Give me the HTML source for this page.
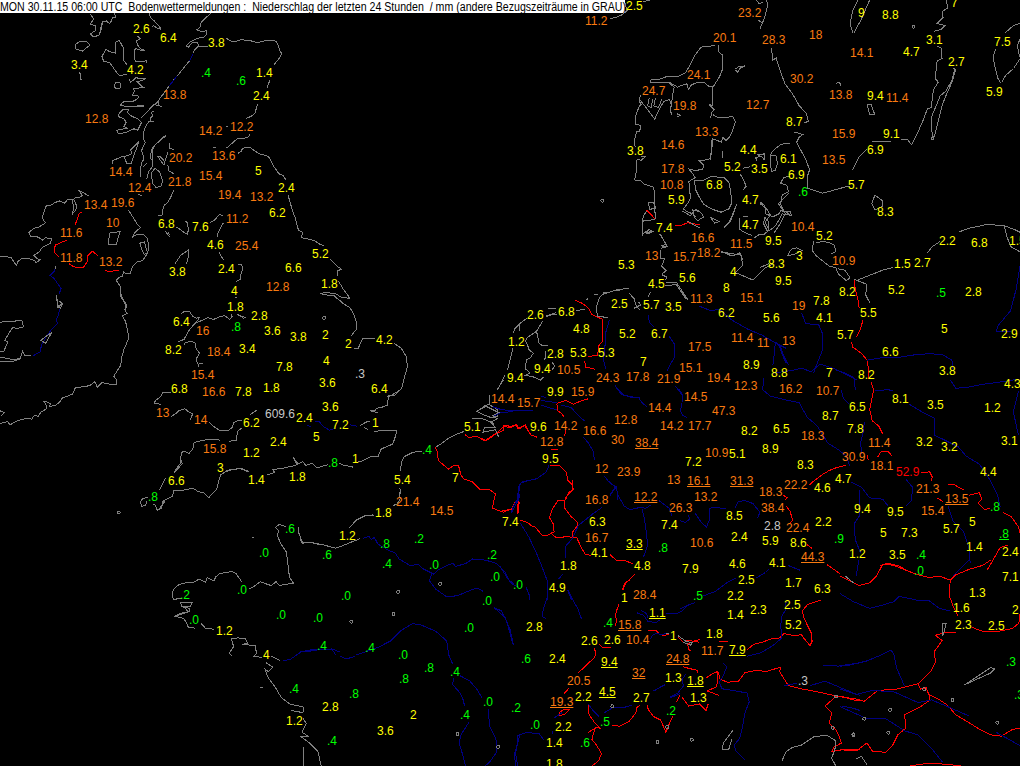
<!DOCTYPE html>
<html><head><meta charset="utf-8"><style>
html,body{margin:0;padding:0;background:#000;width:1020px;height:766px;overflow:hidden;position:relative}
.l{position:absolute;font-family:"Liberation Sans",sans-serif;font-size:12px;line-height:12px;white-space:nowrap}
.y{color:#ffff00}.o{color:#f87a10}.g{color:#00ff00}.w{color:#c8c8c8}.r{color:#ff0000}
.u{text-decoration:underline;text-underline-offset:1px}
#hd{position:absolute;left:0;top:0;width:625px;height:13px;background:#fff;overflow:hidden}
#hd span{position:absolute;left:0;top:1px;font-family:"Liberation Sans",sans-serif;font-size:12px;line-height:12px;color:#000;white-space:nowrap;transform-origin:0 0;transform:scaleX(0.884)}
svg{position:absolute;left:0;top:0}
</style></head><body>
<svg width="1020" height="766" style="position:absolute;left:0;top:0" shape-rendering="crispEdges"><polyline points="100.0,29.9 102.6,21.6 106.4,21.0 109.6,23.5 111.5,21.0 112.2,17.8 115.4,17.1 114.7,13.0" fill="none" stroke="#808080" stroke-width="1"/><polyline points="90.0,14.0 94.0,19.0 90.0,24.0 96.0,26.0 95.0,31.0 90.0,34.0 94.0,37.0 99.0,35.0 101.0,30.0 102.6,21.6" fill="none" stroke="#808080" stroke-width="1"/><polyline points="75.0,45.0 80.0,41.0 86.0,41.0 90.0,45.0 82.5,51.0 76.0,49.0 75.0,45.0" fill="none" stroke="#808080" stroke-width="1"/><polyline points="79.0,72.0 81.0,75.0 80.0,79.0 82.0,79.5" fill="none" stroke="#808080" stroke-width="1"/><polyline points="149.3,13.0 150.5,17.8 153.7,20.3 156.3,23.5 158.9,26.1 161.4,29.3" fill="none" stroke="#808080" stroke-width="1"/><polyline points="152.5,26.7 153.5,25.5 157.0,28.0 161.4,29.3" fill="none" stroke="#808080" stroke-width="1"/><polyline points="137.7,36.3 140.3,38.9 136.5,40.8 137.7,45.3 140.9,49.1 145.4,50.4 140.9,50.4 135.2,48.5 134.3,53.0 135.2,61.3 139.7,61.9 144.1,61.3 146.7,60.6 146.1,62.5" fill="none" stroke="#808080" stroke-width="1"/><polyline points="126.9,64.5 123.7,60.6 123.0,47.2 119.2,40.2 116.0,42.1 115.4,53.0 109.6,51.7 105.8,49.1 101.9,56.8 103.8,61.3 109.6,62.5 112.8,67.0 115.4,70.9 119.2,75.3 126.9,74.7" fill="none" stroke="#808080" stroke-width="1"/><polyline points="128.8,78.5 130.7,82.4 136.5,77.3 138.4,78.5 145.4,78.5 144.1,79.8 137.1,81.7 140.9,85.6 144.1,87.5 142.2,87.5 133.3,88.8 134.5,91.3 132.6,95.2 137.7,95.8 139.0,97.1 134.5,100.9 122.4,102.2 121.1,105.4 128.2,106.7 138.4,106.0 143.5,106.7" fill="none" stroke="#808080" stroke-width="1"/><polyline points="161.4,96.5 169.1,86.2 176.8,76.0 179.3,73.4 189.6,60.6 193.4,53.6" fill="none" stroke="#808080" stroke-width="1"/><polyline points="169.1,86.2 176.8,76.0" fill="none" stroke="#000080" stroke-width="1"/><polyline points="189.6,60.6 193.4,53.6" fill="none" stroke="#000080" stroke-width="1"/><polyline points="211.3,13.0 204.9,18.4 201.1,22.2 199.8,27.4 196.6,29.9 202.4,31.8 206.2,30.6 206.2,35.0 203.6,37.6 197.3,38.2 189.6,42.1 186.4,45.9 188.3,47.2 192.1,42.7 197.3,42.1 198.5,45.9 194.7,49.7 192.8,53.6" fill="none" stroke="#808080" stroke-width="1"/><polyline points="198.5,45.9 202.4,46.5 207.5,46.5" fill="none" stroke="#808080" stroke-width="1"/><polyline points="151.2,107.3 156.3,103.5 159.5,99.0 161.4,96.5" fill="none" stroke="#808080" stroke-width="1"/><polyline points="135.2,100.6 130.7,101.9 123.0,101.9 121.1,104.5 124.3,106.4 130.7,107.0 138.4,105.8 143.5,105.8" fill="none" stroke="#808080" stroke-width="1"/><polyline points="128.8,109.6 123.0,109.6 119.2,113.4 118.6,116.6 124.3,119.2 126.2,123.0 123.7,126.2 126.9,128.2 117.9,130.1 116.6,130.7 118.6,133.9 125.6,132.6 133.9,128.8 137.7,130.1 141.6,122.4 138.4,119.2 130.1,115.4 127.5,112.2 128.8,109.6" fill="none" stroke="#808080" stroke-width="1"/><polyline points="140.9,117.9 148.6,110.2 153.7,104.5 158.9,105.8 162.1,106.4" fill="none" stroke="#808080" stroke-width="1"/><polyline points="158.9,100.0 158.2,105.1" fill="none" stroke="#808080" stroke-width="1"/><polyline points="153.7,110.9 151.2,112.8 153.1,116.0 149.9,117.9 150.5,121.1 153.7,121.8 148.6,121.8 145.4,126.9 143.5,132.0 144.1,140.9 145.4,142.2 141.6,150.5 142.2,152.5 144.1,158.9 141.6,162.7 140.9,166.5 140.3,176.8" fill="none" stroke="#808080" stroke-width="1"/><polyline points="147.3,162.7 142.9,167.2" fill="none" stroke="#808080" stroke-width="1"/><polyline points="112.2,164.0 112.2,160.8 123.0,156.3 125.6,156.3 132.0,153.7 130.7,149.9 139.0,141.6 134.5,153.7 131.3,163.3 126.9,164.0 124.3,156.9" fill="none" stroke="#808080" stroke-width="1"/><polyline points="166.5,135.8 162.7,137.1 153.7,146.1 151.2,151.2 150.5,158.9 152.5,160.1 152.5,166.5 148.6,171.7 146.7,179.3" fill="none" stroke="#808080" stroke-width="1"/><polyline points="165.9,135.8 155.0,144.8 152.5,149.9 152.5,160.1" fill="none" stroke="#808080" stroke-width="1"/><polygon points="157.6,156.3 164.0,165.3 164.6,161.4 160.1,156.3" fill="none" stroke="#808080" stroke-width="1"/><polyline points="169.7,142.9 169.1,148.6 173.6,149.3" fill="none" stroke="#808080" stroke-width="1"/><polyline points="167.8,152.5 165.3,160.1 166.5,161.4" fill="none" stroke="#808080" stroke-width="1"/><polygon points="155.0,168.5 151.2,172.9 152.5,183.2 156.3,187.7 161.4,185.7 162.7,180.6 159.5,171.7" fill="none" stroke="#808080" stroke-width="1"/><polyline points="167.8,165.3 169.1,171.0 173.6,173.6" fill="none" stroke="#808080" stroke-width="1"/><polyline points="174.2,189.6 170.4,197.9" fill="none" stroke="#808080" stroke-width="1"/><polyline points="137.7,194.7 142.2,195.3" fill="none" stroke="#808080" stroke-width="1"/><polyline points="226.2,38.3 232.0,41.5 238.4,40.9 240.9,39.2 244.8,40.2 251.2,40.9 256.3,42.4 261.4,41.8 266.5,40.2 274.2,40.2 276.8,42.2 278.7,46.6 280.0,51.1 281.9,53.7 279.3,58.2 274.2,64.5" fill="none" stroke="#808080" stroke-width="1"/><polyline points="269.7,80.5 267.2,87.6" fill="none" stroke="#808080" stroke-width="1"/><polyline points="257.6,103.6 255.0,113.2 251.2,116.4 246.1,118.3" fill="none" stroke="#808080" stroke-width="1"/><polyline points="225.6,126.6 227.5,126.6" fill="none" stroke="#808080" stroke-width="1"/><polyline points="249.9,134.3 248.6,136.9 244.8,138.2 237.1,138.8 232.0,143.3 228.2,147.1 225.6,147.7" fill="none" stroke="#808080" stroke-width="1"/><polyline points="212.8,147.5 216.0,147.5" fill="none" stroke="#808080" stroke-width="1"/><polyline points="237.7,153.5 240.9,151.6 242.2,149.0 244.8,147.4 250.5,147.4 253.7,150.3 260.1,154.1 267.8,156.1 270.4,159.3 272.9,165.0 276.8,170.8 279.3,174.0 283.2,175.3 285.7,179.7" fill="none" stroke="#808080" stroke-width="1"/><polyline points="288.3,195.1 291.5,207.2" fill="none" stroke="#808080" stroke-width="1"/><polyline points="173.7,190.0 170.5,197.7 167.9,202.2 164.1,205.4 162.2,211.1 162.8,215.0" fill="none" stroke="#808080" stroke-width="1"/><polyline points="158.3,215.6 162.2,215.6" fill="none" stroke="#808080" stroke-width="1"/><polyline points="165.4,231.0 167.9,234.8 170.5,237.3" fill="none" stroke="#808080" stroke-width="1"/><polyline points="168.6,232.2 169.2,235.4" fill="none" stroke="#808080" stroke-width="1"/><polyline points="176.2,227.1 180.7,229.7 184.5,232.9 187.7,234.1 188.4,228.4 187.1,222.6 185.2,221.4 188.4,222.6" fill="none" stroke="#808080" stroke-width="1"/><polyline points="210.1,222.6 214.0,220.7 219.7,214.3 223.6,216.2" fill="none" stroke="#808080" stroke-width="1"/><polyline points="223.6,222.6 221.0,227.1 217.8,233.5 217.2,236.7" fill="none" stroke="#808080" stroke-width="1"/><polyline points="219.1,252.1 223.6,260.4" fill="none" stroke="#808080" stroke-width="1"/><polyline points="175.0,263.6 180.7,255.3 188.4,250.1 188.4,256.5 186.5,263.6" fill="none" stroke="#808080" stroke-width="1"/><polyline points="237.7,264.2 241.5,264.9 242.8,268.1 240.9,274.5 240.2,279.6 236.4,281.5" fill="none" stroke="#808080" stroke-width="1"/><polyline points="288.2,195.5 291.4,207.3 295.3,218.2 298.4,230.0 302.4,232.4 301.6,237.8 307.1,238.6 314.9,241.0 319.6,244.1 323.5,245.7" fill="none" stroke="#808080" stroke-width="1"/><polyline points="329.8,259.0 333.7,262.9 336.9,266.1 341.6,269.2 337.6,270.8 337.6,275.5" fill="none" stroke="#808080" stroke-width="1"/><polyline points="338.4,281.0 343.1,288.8 347.8,295.1 349.4,298.2 341.6,297.5 335.3,293.5 325.9,292.7 319.6,293.5 327.5,295.1 333.7,295.1 336.9,298.2 344.7,304.5 351.0,308.4" fill="none" stroke="#808080" stroke-width="1"/><polyline points="339.0,300.0 343.5,303.8 349.9,307.7 353.7,314.1 356.3,321.8 356.3,329.4 351.2,335.8" fill="none" stroke="#808080" stroke-width="1"/><polyline points="354.4,348.4 358.2,348.4 362.7,338.4 374.9,338.4" fill="none" stroke="#808080" stroke-width="1"/><polyline points="394.0,343.5 401.1,348.0 406.2,356.3 407.5,366.5 404.9,375.5 401.7,388.3 394.0,396.0 389.6,395.3 387.0,397.2" fill="none" stroke="#808080" stroke-width="1"/><polyline points="400.0,390.2 390.6,395.7 388.2,398.0 387.5,405.1 381.2,407.5 376.5,408.2 374.9,410.6 370.2,410.6 378.0,412.9" fill="none" stroke="#808080" stroke-width="1"/><polyline points="360.2,425.5 367.1,421.6 370.2,421.6" fill="none" stroke="#808080" stroke-width="1"/><polyline points="363.9,427.1 368.6,430.2" fill="none" stroke="#808080" stroke-width="1"/><polyline points="374.1,431.0 378.0,431.0 382.7,430.2 396.9,430.2 394.5,439.6 392.2,444.3 381.2,449.0 378.0,456.9 370.2,456.9 360.8,461.6 356.1,462.4" fill="none" stroke="#808080" stroke-width="1"/><polyline points="352.9,467.1 342.0,464.7 339.6,463.1" fill="none" stroke="#808080" stroke-width="1"/><polyline points="327.8,464.7 316.9,467.8 312.2,463.1 305.9,465.5 302.7,461.6 298.0,463.9 293.3,457.6 297.3,464.7 291.8,466.3 280.8,468.6 272.9,469.4 274.5,472.5 266.7,474.9" fill="none" stroke="#808080" stroke-width="1"/><polyline points="240.0,468.6 248.6,471.8" fill="none" stroke="#808080" stroke-width="1"/><polyline points="307.5,425.5 310.6,426.3" fill="none" stroke="#000080" stroke-width="1"/><polyline points="315.3,421.6 319.2,421.6 323.1,426.3 329.4,430.2 334.1,428.6" fill="none" stroke="#000080" stroke-width="1"/><polyline points="349.8,424.7 356.9,426.3" fill="none" stroke="#000080" stroke-width="1"/><polyline points="250.2,414.5 257.3,409.8" fill="none" stroke="#808080" stroke-width="1"/><polyline points="180.9,313.7 184.8,311.1 189.9,311.8 192.5,316.2 196.3,318.2 199.5,317.5 196.9,321.4 191.2,327.7 188.6,330.9 184.1,339.3 178.4,341.8" fill="none" stroke="#808080" stroke-width="1"/><polyline points="196.3,322.6 201.4,320.7 207.8,317.5 213.6,319.4 219.3,316.9 224.5,315.6 229.6,319.4 232.1,316.9 231.5,313.7" fill="none" stroke="#808080" stroke-width="1"/><polyline points="237.2,314.3 243.6,318.2 244.9,317.5 238.5,315.0" fill="none" stroke="#808080" stroke-width="1"/><polyline points="235.3,298.3 236.6,297.0" fill="none" stroke="#808080" stroke-width="1"/><polyline points="184.1,344.4 185.4,342.5 191.2,341.2 195.0,343.1 196.3,348.9 199.5,353.3 196.9,357.8 196.3,359.7 198.9,366.8" fill="none" stroke="#808080" stroke-width="1"/><polyline points="198.9,363.6 202.7,363.6" fill="none" stroke="#808080" stroke-width="1"/><polyline points="171.0,392.8 167.1,392.8 162.6,392.8 160.7,396.6 155.6,400.5 154.3,403.0 160.7,404.3" fill="none" stroke="#808080" stroke-width="1"/><polyline points="171.0,416.5 175.4,413.9 178.6,410.7 185.0,408.8 188.9,412.0 192.7,413.9 190.1,419.7" fill="none" stroke="#808080" stroke-width="1"/><polyline points="208.7,421.6 213.2,426.1 219.6,430.5 228.5,430.5 232.4,427.3 233.6,422.9 237.5,420.9 242.0,420.9" fill="none" stroke="#808080" stroke-width="1"/><polyline points="242.0,428.0 237.5,431.2 236.2,440.1 228.5,441.4" fill="none" stroke="#808080" stroke-width="1"/><polyline points="219.6,440.1 209.3,439.1 200.4,440.8 194.0,442.7 192.7,449.1 188.9,453.6 183.7,451.0 181.2,452.9 180.5,463.2 174.1,472.1" fill="none" stroke="#808080" stroke-width="1"/><polyline points="226.0,471.5 232.4,469.6 241.3,468.3 249.0,471.5" fill="none" stroke="#808080" stroke-width="1"/><polyline points="181.4,460.0 182.2,463.9 174.3,472.5" fill="none" stroke="#808080" stroke-width="1"/><polyline points="165.7,478.0 159.4,489.8" fill="none" stroke="#808080" stroke-width="1"/><polyline points="147.6,497.6 142.9,498.4 140.6,501.6 141.4,506.3 145.3,505.5 146.9,501.6" fill="none" stroke="#808080" stroke-width="1"/><polyline points="153.1,503.9 155.5,505.5 157.1,510.2 161.8,507.8 162.5,501.6 168.0,498.4 172.7,496.1 173.5,490.6 181.4,490.6 193.1,488.2 197.8,491.4 204.1,492.9 208.8,497.6 216.7,489.0 219.8,477.3 220.6,474.9 227.6,470.2 240.2,468.6 248.0,471.8" fill="none" stroke="#808080" stroke-width="1"/><polyline points="89.4,196.3 81.6,191.6 79.2,190.8 82.4,195.5 80.0,197.1 75.3,197.8 73.7,199.4 76.9,206.5 75.3,210.4 72.2,214.3 73.7,208.8 72.2,199.4 67.5,199.4 65.9,201.8 64.3,203.3 59.6,201.0 54.9,202.5 50.2,205.7 46.3,205.7 43.9,212.0 42.4,217.5 43.9,220.6 45.5,222.9 39.2,226.9 33.7,228.4 29.0,232.4 30.6,236.3 38.4,237.1 42.4,240.2 45.5,237.8 51.8,238.6 50.2,243.3 42.4,247.3 39.2,252.0 33.7,255.1 37.6,259.0 40.0,259.8 36.1,262.9 34.5,260.6 29.8,259.0 22.0,258.2 18.0,261.4 16.5,265.3 14.1,262.2 11.0,257.5 6.3,256.7 0.0,256.7" fill="none" stroke="#808080" stroke-width="1"/><polyline points="81.6,212.0 79.2,213.5 75.3,224.5" fill="none" stroke="#ff0000" stroke-width="1"/><polyline points="66.7,240.2 62.7,241.8 55.7,244.9 54.1,248.8 54.9,252.7 58.8,256.7" fill="none" stroke="#ff0000" stroke-width="1"/><polyline points="69.0,263.7 73.7,266.9 83.1,267.6 87.1,262.2 87.8,255.9 92.5,251.2 98.0,255.9" fill="none" stroke="#ff0000" stroke-width="1"/><polyline points="105.1,270.0 108.2,271.6 119.2,270.3" fill="none" stroke="#ff0000" stroke-width="1"/><polyline points="128.6,210.4 134.1,219.0 138.0,225.3 140.4,227.6 134.9,232.4 132.5,237.1 136.5,234.7 143.5,234.7 147.5,238.6 149.0,248.0 146.7,254.3 142.7,260.6 136.5,262.2 132.5,266.9 130.2,273.1 125.5,273.9 123.9,271.6 122.4,276.3 119.2,277.1 116.1,280.2 120.8,287.3 120.8,296.7 123.9,301.4 126.3,306.1 125.5,310.0" fill="none" stroke="#808080" stroke-width="1"/><polygon points="109.8,233.1 120.0,231.6 116.1,244.9 108.2,244.1" fill="none" stroke="#808080" stroke-width="1"/><polygon points="139.6,243.3 144.3,241.8 147.5,252.7 144.3,254.3 142.0,249.6" fill="none" stroke="#808080" stroke-width="1"/><polyline points="55.7,266.9 54.1,271.6 50.2,275.5 54.1,278.6 58.0,284.1 61.2,288.8 58.8,294.3" fill="none" stroke="#000080" stroke-width="1"/><polyline points="55.0,266.0 55.7,268.5" fill="none" stroke="#808080" stroke-width="1"/><polyline points="56.5,295.1 58.0,307.6 62.7,302.9" fill="none" stroke="#808080" stroke-width="1"/><polyline points="120.0,290.0 121.6,296.3 126.3,304.9 124.7,309.6 127.1,313.5 122.4,315.9 125.5,321.4 127.8,330.8 128.6,338.6 123.9,349.6 121.6,357.5 120.8,365.3 113.7,376.3 116.9,380.2 116.1,384.1 109.8,384.1 102.0,382.5 97.3,387.3 94.9,381.8 89.4,385.7 75.3,388.0 72.2,394.3 62.0,398.2 59.6,402.2 54.8,405.7 49.7,406.3 50.3,403.8 46.5,401.9 43.3,401.2 45.9,403.8 46.5,408.9 40.8,412.1 38.2,416.5 34.4,415.2 31.9,419.1 26.8,418.4 19.1,420.3 14.0,422.3 10.2,424.8 7.6,421.6 0.0,423.5" fill="none" stroke="#808080" stroke-width="1"/><polyline points="0.0,322.2 9.4,321.4 22.0,320.6 23.5,326.9 17.3,328.4 12.5,327.7 9.4,332.4 4.7,340.2 7.8,341.8 3.9,351.2 0.0,351.2" fill="none" stroke="#808080" stroke-width="1"/><polyline points="0.0,357.5 6.3,358.2 14.1,359.8 20.4,358.2 22.7,351.2 25.1,355.9 31.4,355.9" fill="none" stroke="#808080" stroke-width="1"/><polyline points="0.0,361.4 12.5,361.4 20.4,359.0" fill="none" stroke="#808080" stroke-width="1"/><polyline points="59.6,308.8 58.8,313.5 56.5,319.8 57.3,323.7 51.8,329.2 47.1,335.5 41.6,344.9 40.0,352.0 32.9,355.9" fill="none" stroke="#000080" stroke-width="1"/><polygon points="40.8,340.2 45.5,343.3 51.8,332.4 47.1,335.5" fill="none" stroke="#808080" stroke-width="1"/><polyline points="56.5,296.3 57.3,304.1 60.4,308.0 62.7,303.3 58.8,301.0" fill="none" stroke="#808080" stroke-width="1"/><polyline points="527.1,318.0 520.0,323.5 514.5,329.0 513.7,332.9" fill="none" stroke="#808080" stroke-width="1"/><polyline points="512.9,347.8 510.6,358.0 507.5,369.8" fill="none" stroke="#808080" stroke-width="1"/><polyline points="505.1,374.5 497.3,390.2" fill="none" stroke="#808080" stroke-width="1"/><polyline points="489.4,394.9 489.4,404.3" fill="none" stroke="#808080" stroke-width="1"/><polyline points="489.4,404.3 484.7,405.9 476.9,411.4 483.1,414.5 491.0,417.6 497.3,416.1 498.0,409.8 492.5,406.7 489.4,404.3" fill="none" stroke="#808080" stroke-width="1"/><polyline points="472.2,418.4 481.6,418.4" fill="none" stroke="#808080" stroke-width="1"/><polyline points="520.0,323.5 519.2,330.6" fill="none" stroke="#808080" stroke-width="1"/><polyline points="542.7,321.2 536.5,331.4 527.1,337.6 525.5,340.8 527.8,345.5 528.6,349.4 533.3,353.3 530.2,358.0 526.3,359.6 525.5,369.0 530.2,372.9 525.5,375.3 533.3,376.9 540.4,380.0 543.5,376.9" fill="none" stroke="#808080" stroke-width="1"/><polyline points="536.5,331.4 538.0,337.6 538.0,342.4 542.0,345.5 547.5,345.5" fill="none" stroke="#808080" stroke-width="1"/><polyline points="546.7,316.5 553.7,314.1 556.9,314.1" fill="none" stroke="#808080" stroke-width="1"/><polyline points="547.5,308.6 556.1,308.6" fill="none" stroke="#808080" stroke-width="1"/><polyline points="545.1,351.0 545.9,357.3 543.5,360.4" fill="none" stroke="#808080" stroke-width="1"/><polyline points="552.2,362.0 554.5,365.9 552.2,369.8" fill="none" stroke="#808080" stroke-width="1"/><polyline points="492.5,406.7 502.0,409.8 512.9,410.6 533.3,410.6" fill="none" stroke="#000080" stroke-width="1"/><polyline points="494.1,416.1 500.4,412.9 512.9,411.4" fill="none" stroke="#000080" stroke-width="1"/><polyline points="541.2,396.5 545.9,397.3" fill="none" stroke="#000080" stroke-width="1"/><polyline points="541.2,400.4 556.9,402.7" fill="none" stroke="#000080" stroke-width="1"/><polyline points="541.2,405.1 550.6,408.2 556.9,409.8" fill="none" stroke="#000080" stroke-width="1"/><polyline points="464.1,431.4 457.8,433.7 448.4,438.4 442.2,443.1 435.9,447.1" fill="none" stroke="#808080" stroke-width="1"/><polyline points="421.8,451.0 412.4,452.5 404.5,456.5 401.4,462.0 400.6,470.6" fill="none" stroke="#808080" stroke-width="1"/><polyline points="399.8,487.8 400.6,494.1" fill="none" stroke="#808080" stroke-width="1"/><polyline points="395.9,504.3 392.7,505.9" fill="none" stroke="#808080" stroke-width="1"/><polyline points="373.9,515.3 370.0,516.1" fill="none" stroke="#808080" stroke-width="1"/><polyline points="435.1,447.1 437.5,451.8 438.2,460.4 443.7,465.1 448.4,469.0 454.7,465.1 458.6,465.9 461.0,475.3 464.1,479.2 472.0,481.6 476.7,486.3 479.8,489.4 489.2,489.4 495.5,494.1 493.9,500.4 492.4,508.2 503.3,512.2 512.7,508.2 515.1,502.0 517.5,500.4 519.0,503.5 518.2,512.9" fill="none" stroke="#ff0000" stroke-width="1"/><polyline points="464.9,434.5 468.8,437.6 476.7,436.1 484.5,440.8 495.5,433.7 503.3,430.6 503.3,425.1 508.0,427.5 516.7,424.3 519.0,429.0 525.3,425.1 528.4,431.4" fill="none" stroke="#ff0000" stroke-width="1"/><polyline points="476.7,411.0 486.1,406.3 498.6,412.5 492.4,415.7 497.1,418.8 490.8,422.0 495.5,427.5 484.5,427.5 482.9,432.2 495.5,429.8 498.6,436.9" fill="none" stroke="#808080" stroke-width="1"/><polyline points="472.0,418.8 482.2,418.5 493.9,423.5" fill="none" stroke="#808080" stroke-width="1"/><polyline points="530.0,480.0 520.6,483.1 518.2,491.0 518.2,500.4 511.2,512.9" fill="none" stroke="#000080" stroke-width="1"/><polyline points="655.3,218.8 649.8,220.4 643.5,220.4 642.0,226.7 642.7,236.1" fill="none" stroke="#808080" stroke-width="1"/><polyline points="646.7,211.0 643.5,215.7 642.0,222.0" fill="none" stroke="#808080" stroke-width="1"/><polygon points="648.2,203.0 652.9,202.0 656.0,208.0 649.8,209.4" fill="none" stroke="#808080" stroke-width="1"/><polyline points="654.5,200.0 655.3,218.8" fill="none" stroke="#808080" stroke-width="1"/><polygon points="645.1,232.2 649.8,229.8 652.9,231.4 648.2,233.7" fill="none" stroke="#808080" stroke-width="1"/><polyline points="646.7,210.2 652.2,215.7 655.3,219.6" fill="none" stroke="#ff0000" stroke-width="1"/><polyline points="674.9,225.1 680.4,225.9 687.5,222.7 692.2,223.5 700.0,225.1" fill="none" stroke="#ff0000" stroke-width="1"/><polyline points="682.0,211.0 690.6,215.7 695.3,209.4 700.0,211.8" fill="none" stroke="#808080" stroke-width="1"/><polyline points="687.5,221.2 700.0,228.2" fill="none" stroke="#808080" stroke-width="1"/><polyline points="660.0,233.7 663.9,240.8 667.1,246.3 662.4,247.1 661.6,245.5 665.5,244.7" fill="none" stroke="#808080" stroke-width="1"/><polyline points="660.8,250.2 660.0,258.0 664.7,258.8 661.6,265.9 666.3,270.6 662.4,273.7 662.4,275.3 667.1,276.9 665.5,280.0" fill="none" stroke="#808080" stroke-width="1"/><polyline points="665.5,282.4 676.5,282.4 688.2,300.4" fill="none" stroke="#808080" stroke-width="1"/><polyline points="665.5,285.5 676.5,284.7 685.9,298.8" fill="none" stroke="#808080" stroke-width="1"/><polyline points="650.6,291.8 648.2,296.5" fill="none" stroke="#808080" stroke-width="1"/><polyline points="628.6,288.6 618.4,289.4 610.6,291.8 604.3,293.3 599.6,297.3 596.5,306.7 597.3,316.1 607.5,317.6" fill="none" stroke="#808080" stroke-width="1"/><polyline points="628.6,292.5 634.1,298.8 636.5,306.7 640.4,310.6" fill="none" stroke="#808080" stroke-width="1"/><polyline points="638.8,302.0 640.4,305.1 634.1,308.2" fill="none" stroke="#808080" stroke-width="1"/><polyline points="613.7,291.0 623.1,289.4" fill="none" stroke="#808080" stroke-width="1"/><polyline points="602.7,292.5 607.5,293.3" fill="none" stroke="#808080" stroke-width="1"/><polyline points="594.1,294.9 598.0,294.4" fill="none" stroke="#808080" stroke-width="1"/><polyline points="585.5,300.4 587.8,298.8" fill="none" stroke="#808080" stroke-width="1"/><polyline points="574.5,299.6 582.4,303.5 588.6,308.2 591.8,314.5 596.5,316.9 602.7,319.2" fill="none" stroke="#ff0000" stroke-width="1"/><polyline points="576.1,310.6 585.5,309.0" fill="none" stroke="#808080" stroke-width="1"/><polyline points="547.8,308.2 555.7,308.2" fill="none" stroke="#808080" stroke-width="1"/><polyline points="546.3,316.1 555.7,312.9" fill="none" stroke="#808080" stroke-width="1"/><polyline points="715.1,45.5 701.0,47.1 694.7,55.7 689.2,66.7 685.3,72.9 677.5,76.9 668.0,76.1 657.1,80.0 651.6,79.2 650.0,82.4" fill="none" stroke="#808080" stroke-width="1"/><polyline points="640.6,94.9 639.0,101.2 641.4,104.3 639.0,106.7 635.9,115.3 635.1,123.9 640.6,125.5 639.8,131.0 636.7,131.0 635.1,137.3 634.3,142.0 635.1,146.7" fill="none" stroke="#808080" stroke-width="1"/><polyline points="641.4,156.9 646.1,156.1" fill="none" stroke="#808080" stroke-width="1"/><polyline points="718.2,45.5 719.0,51.8 722.2,54.9 722.9,68.2 719.8,76.1 715.1,83.9 712.7,87.1 712.7,105.9 708.8,104.3 714.3,109.8 712.0,112.2 710.4,118.4" fill="none" stroke="#808080" stroke-width="1"/><polyline points="712.7,114.5 718.2,117.6 726.1,117.6 732.4,116.1 735.5,121.6 732.4,131.0 729.2,137.3 726.1,140.4 722.9,137.3 721.4,142.0 716.7,140.4 712.7,138.8 712.0,146.7 710.4,160.0" fill="none" stroke="#808080" stroke-width="1"/><polyline points="650.0,82.4 657.1,82.4 669.6,82.4 677.5,87.1 683.7,84.7 686.9,83.9 688.4,89.4 691.6,84.7 697.8,82.4 704.1,82.4 708.8,86.3 712.7,87.1" fill="none" stroke="#808080" stroke-width="1"/><polyline points="668.8,83.1 674.3,87.1 672.7,94.9 670.4,110.6 672.0,115.3" fill="none" stroke="#808080" stroke-width="1"/><polyline points="639.8,99.6 650.8,113.7 654.7,119.2 657.1,113.7 661.0,105.9 664.1,101.2 669.6,99.6 671.2,104.3" fill="none" stroke="#808080" stroke-width="1"/><polyline points="649.2,98.0 647.6,105.9 651.6,107.5 652.4,98.8" fill="none" stroke="#808080" stroke-width="1"/><polyline points="655.5,98.0 653.9,105.9 658.6,107.5 661.8,98.8" fill="none" stroke="#808080" stroke-width="1"/><polyline points="735.5,69.0 738.6,66.7 744.9,65.9 740.2,68.2 737.8,72.2 735.5,69.8" fill="none" stroke="#808080" stroke-width="1"/><polyline points="676.7,113.7 680.6,115.3 677.5,116.9" fill="none" stroke="#808080" stroke-width="1"/><polyline points="722.2,151.4 722.9,157.6" fill="none" stroke="#808080" stroke-width="1"/><polyline points="757.5,156.1 765.3,152.9" fill="none" stroke="#808080" stroke-width="1"/><polyline points="637.8,158.8 641.0,160.4 645.7,156.5" fill="none" stroke="#808080" stroke-width="1"/><polyline points="637.1,158.8 636.3,171.4 634.7,180.0 641.0,180.8 644.1,183.9 653.5,187.1 654.3,191.8 654.3,207.5 655.9,219.2" fill="none" stroke="#808080" stroke-width="1"/><polyline points="711.6,140.0 711.6,149.4 710.0,158.8 703.7,160.4 699.0,160.4 703.7,165.1 702.9,169.0 695.9,170.6 688.8,169.0 692.7,173.7 695.1,177.6 688.8,181.6 689.6,188.6 690.4,198.0 688.0,202.7 683.3,209.0 688.0,212.2 692.7,213.7 695.9,216.9" fill="none" stroke="#808080" stroke-width="1"/><polygon points="694.3,180.8 703.7,180.0 711.6,176.1 715.5,176.9 724.1,177.6 728.8,182.4 730.4,190.2 732.0,202.7 728.8,209.0 721.0,212.2 711.6,209.0 703.7,204.3 699.0,196.5 695.9,190.2" fill="none" stroke="#808080" stroke-width="1"/><polygon points="692.7,209.8 700.6,212.2 703.7,216.9 697.5,220.8 694.3,216.9" fill="none" stroke="#808080" stroke-width="1"/><polygon points="736.7,204.3 730.4,220.0 724.1,227.8 730.4,221.6" fill="none" stroke="#808080" stroke-width="1"/><polygon points="710.0,216.9 714.7,223.1 719.4,221.6" fill="none" stroke="#808080" stroke-width="1"/><polyline points="742.9,168.2 747.6,167.5 750.0,166.7" fill="none" stroke="#808080" stroke-width="1"/><polyline points="757.1,154.1 764.9,154.1 764.1,159.6 761.8,156.5 755.5,157.3 757.1,161.2" fill="none" stroke="#808080" stroke-width="1"/><polyline points="771.2,153.3 774.3,149.4 780.6,144.7 786.9,143.1 790.0,143.9" fill="none" stroke="#808080" stroke-width="1"/><polygon points="770.4,154.9 775.9,155.7 777.5,163.5 775.1,170.6 771.2,171.4" fill="none" stroke="#808080" stroke-width="1"/><polyline points="739.8,173.7 743.7,180.0 746.1,186.3 742.9,190.2" fill="none" stroke="#808080" stroke-width="1"/><polyline points="760.2,202.0 764.9,205.9 765.7,213.7 772.7,216.9 779.0,213.7 780.6,210.6 786.9,212.2 790.0,215.3" fill="none" stroke="#808080" stroke-width="1"/><polyline points="739.8,218.4 739.8,229.4 744.5,232.5 752.4,235.7" fill="none" stroke="#808080" stroke-width="1"/><polyline points="742.9,216.1 747.6,216.4" fill="none" stroke="#808080" stroke-width="1"/><polyline points="753.9,238.0 758.6,234.9 763.3,234.9 768.0,231.0 768.8,221.6 764.9,217.6 763.3,223.1 767.3,231.0" fill="none" stroke="#808080" stroke-width="1"/><polyline points="774.3,232.5 780.6,223.1 785.3,213.7 780.6,204.3 782.2,194.9 788.4,191.8 786.9,185.5 780.6,183.1 783.7,177.6 790.0,176.1" fill="none" stroke="#808080" stroke-width="1"/><polyline points="659.8,234.1 667.6,246.7 661.4,248.2" fill="none" stroke="#808080" stroke-width="1"/><polyline points="721.0,251.4 732.0,256.1 739.8,252.9 742.9,260.0" fill="none" stroke="#808080" stroke-width="1"/><polyline points="642.5,234.0 648.8,229.5 652.0,231.0 645.7,233.3" fill="none" stroke="#808080" stroke-width="1"/><polyline points="760.0,28.7 765.2,15.7 767.8,5.2 766.5,0.0" fill="none" stroke="#808080" stroke-width="1"/><polyline points="771.7,48.3 772.5,60.1 776.2,58.0 778.8,66.6 784.8,83.6 792.6,94.0 799.2,105.7 806.5,113.6 808.3,121.4 804.4,122.7" fill="none" stroke="#808080" stroke-width="1"/><polyline points="793.9,131.9 803.1,134.5 799.2,137.1 796.6,142.3 805.7,159.3 809.6,169.7 807.0,177.5 807.0,188.0 822.7,193.2 846.2,186.7 850.1,185.9" fill="none" stroke="#808080" stroke-width="1"/><polyline points="852.7,169.7 859.2,156.7 867.0,148.8" fill="none" stroke="#808080" stroke-width="1"/><polyline points="872.3,141.0 890.5,141.0" fill="none" stroke="#808080" stroke-width="1"/><polyline points="852.7,32.6 850.1,23.5 852.7,10.4 857.9,0.0" fill="none" stroke="#808080" stroke-width="1"/><polyline points="854.0,32.6 860.5,20.9 869.7,0.0" fill="none" stroke="#808080" stroke-width="1"/><polygon points="867.0,104.4 869.7,114.9 874.9,114.9 871.0,104.4" fill="none" stroke="#808080" stroke-width="1"/><polyline points="835.7,83.6 839.6,82.2 840.9,86.2" fill="none" stroke="#808080" stroke-width="1"/><polygon points="874.9,195.1 882.7,200.9 882.7,206.1 874.9,210.0 871.7,203.5" fill="none" stroke="#808080" stroke-width="1"/><polyline points="854.0,279.2 855.3,289.7 857.9,298.8 859.2,307.9" fill="none" stroke="#ff0000" stroke-width="1"/><polyline points="863.1,319.7 860.5,328.8 856.6,336.7" fill="none" stroke="#ff0000" stroke-width="1"/><polyline points="851.4,341.9 852.7,347.1 861.8,353.6 867.0,360.2 868.4,368.0 868.0,380.0" fill="none" stroke="#ff0000" stroke-width="1"/><polyline points="801.8,313.2 805.7,323.6 818.7,324.9 822.7,334.0 822.7,349.7 817.4,362.8 813.5,373.2" fill="none" stroke="#000080" stroke-width="1"/><polyline points="775.7,341.9 779.6,347.1 783.5,357.5 786.1,362.8" fill="none" stroke="#000080" stroke-width="1"/><polyline points="773.0,373.2 791.3,370.6 801.8,368.0 810.9,371.9 820.1,364.1 835.7,369.3 846.2,374.5 856.6,380.0" fill="none" stroke="#000080" stroke-width="1"/><polyline points="867.0,360.2 882.7,357.5 898.4,357.5 914.1,354.9 929.7,353.6 942.8,354.9 951.9,360.2 953.2,370.6" fill="none" stroke="#000080" stroke-width="1"/><polyline points="1020.0,266.2 1016.0,289.7 1010.7,310.5 997.6,326.2 996.3,331.4 1010.7,331.4" fill="none" stroke="#000080" stroke-width="1"/><polyline points="1004.1,225.7 1006.7,236.1 1010.7,246.6 1020.0,251.8" fill="none" stroke="#808080" stroke-width="1"/><polyline points="958.4,232.2 968.9,228.3 987.2,224.4 1004.1,225.7 1014.6,229.6 1020.0,232.2" fill="none" stroke="#808080" stroke-width="1"/><polyline points="927.1,253.1 932.3,246.6 940.2,241.4" fill="none" stroke="#808080" stroke-width="1"/><polyline points="856.6,280.5 869.7,275.3 882.7,270.1 893.2,267.5" fill="none" stroke="#808080" stroke-width="1"/><polyline points="760.0,267.5 769.1,263.6" fill="none" stroke="#808080" stroke-width="1"/><polygon points="787.4,255.7 791.3,249.2 796.6,247.9 801.8,250.5 793.9,254.4" fill="none" stroke="#808080" stroke-width="1"/><polyline points="813.5,241.4 812.2,250.5 816.1,255.7 822.7,260.9 829.2,266.2 835.7,267.5" fill="none" stroke="#808080" stroke-width="1"/><polyline points="816.1,242.7 822.7,241.4 829.2,242.7 834.4,245.3 835.7,251.8 830.5,254.4" fill="none" stroke="#808080" stroke-width="1"/><polyline points="835.7,267.5 838.3,274.0 846.2,280.5 850.1,277.9 844.9,270.1 838.3,268.8" fill="none" stroke="#808080" stroke-width="1"/><polyline points="854.0,279.2 867.0,284.4 865.7,294.9 869.7,302.7" fill="none" stroke="#808080" stroke-width="1"/><polyline points="760.0,203.5 766.5,208.7 770.4,215.2 765.2,221.8 769.1,230.9 775.7,225.7 782.2,213.9 791.3,215.2 790.0,211.3 783.5,211.3 778.3,203.5 783.5,198.3 788.7,193.1" fill="none" stroke="#808080" stroke-width="1"/><polyline points="298.0,526.7 298.8,532.9 302.7,543.1 310.6,542.4 320.0,544.7" fill="none" stroke="#808080" stroke-width="1"/><polyline points="285.5,526.7 279.2,524.3 275.3,527.5 278.4,530.6 277.6,536.1 280.8,543.9 286.3,551.8 287.8,562.7 289.4,576.9 293.3,583.1 279.2,585.5 276.1,581.6 271.4,585.5 268.2,584.7 260.4,581.6 254.1,586.3 248.6,589.4" fill="none" stroke="#808080" stroke-width="1"/><polyline points="241.6,581.6 236.1,573.7 232.2,571.4 227.5,572.2 219.6,573.7 215.7,576.9 214.1,580.8 207.1,577.6 205.5,582.4 199.2,579.2 192.9,582.4 186.7,582.4 178.8,584.7 173.3,589.4 172.5,594.1 173.3,599.6 182.0,598.0" fill="none" stroke="#808080" stroke-width="1"/><polyline points="192.2,602.0 180.4,602.7 182.0,606.7 189.0,608.2 189.8,611.4 182.0,612.9 174.9,616.1" fill="none" stroke="#808080" stroke-width="1"/><polyline points="252.5,537.6 254.1,536.9" fill="none" stroke="#808080" stroke-width="1"/><polyline points="160.0,507.8 164.7,501.6" fill="none" stroke="#808080" stroke-width="1"/><polyline points="300.0,539.6 302.2,542.8 312.9,542.8 323.7,545.0 335.6,548.2 338.8,547.2 349.6,542.8 360.4,538.5" fill="none" stroke="#808080" stroke-width="1"/><polyline points="349.6,527.7 356.1,520.2 364.7,515.9 373.3,514.8" fill="none" stroke="#808080" stroke-width="1"/><polyline points="393.8,505.1 397.1,504.0 400.3,498.6 399.2,492.2" fill="none" stroke="#808080" stroke-width="1"/><polyline points="362.6,538.5 369.0,536.4 371.2,539.6 374.4,537.5 377.7,543.9 390.6,551.5 394.9,552.6 399.2,559.0 410.0,565.5 418.6,564.4 423.0,568.7 429.4,572.0 433.7,574.1 438.1,569.8 446.7,565.5 453.2,563.3 455.3,566.6 466.1,563.3 472.6,559.0 485.5,560.1 496.3,563.3 504.9,572.0 510.3,582.8 517.9,587.1" fill="none" stroke="#000080" stroke-width="1"/><polyline points="431.6,574.1 429.4,580.6 435.9,589.2 446.7,596.8 457.5,595.7 470.4,590.3 476.9,588.1 483.4,591.4" fill="none" stroke="#000080" stroke-width="1"/><polyline points="494.1,607.6 504.9,617.3 510.3,630.2 513.5,645.3" fill="none" stroke="#000080" stroke-width="1"/><polyline points="300.0,651.8 312.9,649.6 332.4,649.6 335.6,655.0" fill="none" stroke="#000080" stroke-width="1"/><polyline points="356.1,655.0 377.7,647.5 390.6,641.0 401.4,630.2 412.2,623.7 420.8,624.8 435.9,631.3 446.7,641.0 448.8,655.0" fill="none" stroke="#000080" stroke-width="1"/><polyline points="556.9,403.5 565.5,400.4 573.3,404.3 580.4,401.2 587.5,398.8 588.2,399.6" fill="none" stroke="#ff0000" stroke-width="1"/><polyline points="556.9,403.5 557.6,410.6 561.6,413.7 563.9,416.9" fill="none" stroke="#ff0000" stroke-width="1"/><polyline points="480.0,438.0 486.3,440.4 495.7,434.1 503.5,426.3 508.2,425.5 509.8,427.8 516.1,424.7 517.6,428.6 524.7,425.5 527.8,430.2 531.0,434.9 537.3,437.3" fill="none" stroke="#ff0000" stroke-width="1"/><polyline points="565.5,430.2 564.7,435.7" fill="none" stroke="#ff0000" stroke-width="1"/><polyline points="551.4,449.0 558.4,449.0" fill="none" stroke="#ff0000" stroke-width="1"/><polyline points="549.8,465.5 559.2,465.5 566.3,472.5 567.8,480.4 572.5,485.1 573.3,489.8 567.8,494.5 565.5,500.0" fill="none" stroke="#ff0000" stroke-width="1"/><polyline points="561.6,405.1 571.0,407.5 580.4,417.6 584.3,420.8" fill="none" stroke="#000080" stroke-width="1"/><polyline points="583.5,437.3 588.2,442.7 592.9,450.6 594.5,460.0" fill="none" stroke="#000080" stroke-width="1"/><polyline points="603.9,475.7 610.2,483.5 616.5,486.7 618.0,500.0" fill="none" stroke="#000080" stroke-width="1"/><polyline points="610.2,494.5 614.9,487.5" fill="none" stroke="#000080" stroke-width="1"/><polyline points="549.0,465.5 545.9,472.5 536.5,478.8 521.6,482.0 518.4,486.7 517.6,500.0" fill="none" stroke="#000080" stroke-width="1"/><polyline points="614.9,385.5 621.2,394.1 630.6,397.3 640.0,398.0" fill="none" stroke="#000080" stroke-width="1"/><polyline points="497.3,389.4 503.5,380.0" fill="none" stroke="#808080" stroke-width="1"/><polyline points="674.9,386.3 679.6,390.2 682.7,394.9 682.0,402.7 680.4,410.6 682.7,415.3 686.7,417.6" fill="none" stroke="#000080" stroke-width="1"/><polyline points="871.0,381.7 873.6,389.6 869.7,409.2 872.3,420.9 878.8,426.1 882.7,434.0" fill="none" stroke="#ff0000" stroke-width="1"/><polyline points="846.2,465.3 835.7,467.9 829.2,470.5 822.7,474.4 817.4,478.4 812.2,482.3 809.6,484.9" fill="none" stroke="#ff0000" stroke-width="1"/><polyline points="783.5,495.3 787.4,497.9 784.8,500.5" fill="none" stroke="#ff0000" stroke-width="1"/><polyline points="786.1,505.8 790.0,511.0 792.6,520.1 788.7,524.1" fill="none" stroke="#ff0000" stroke-width="1"/><polyline points="806.9,544.6 812.2,548.5" fill="none" stroke="#ff0000" stroke-width="1"/><polyline points="826.8,564.4 840.0,573.7" fill="none" stroke="#ff0000" stroke-width="1"/><polyline points="867.0,454.9 868.4,460.1" fill="none" stroke="#ff0000" stroke-width="1"/><polyline points="877.5,457.5 881.4,451.0 887.9,451.0 892.1,456.2" fill="none" stroke="#ff0000" stroke-width="1"/><polyline points="920.6,473.1 929.7,471.8 932.3,477.0 931.0,480.9" fill="none" stroke="#ff0000" stroke-width="1"/><polyline points="937.5,497.9 942.8,501.8" fill="none" stroke="#ff0000" stroke-width="1"/><polyline points="948.0,484.9 954.5,484.9 963.7,490.1" fill="none" stroke="#ff0000" stroke-width="1"/><polyline points="968.9,495.3 979.3,492.7 981.9,499.2 978.0,503.3 984.5,509.7 989.8,508.4" fill="none" stroke="#ff0000" stroke-width="1"/><polyline points="1002.8,512.3 1010.7,516.2 1018.5,526.7 1020.0,533.2" fill="none" stroke="#ff0000" stroke-width="1"/><polyline points="987.2,570.0 1000.2,547.5 1008.0,544.9" fill="none" stroke="#ff0000" stroke-width="1"/><polyline points="880.1,565.8 887.9,563.2 898.4,565.8 906.2,570.0" fill="none" stroke="#ff0000" stroke-width="1"/><polyline points="874.9,390.9 887.9,389.6 893.2,390.9" fill="none" stroke="#000080" stroke-width="1"/><polyline points="908.8,403.9 921.9,411.8 934.9,418.3 934.9,435.3 942.8,439.2 958.4,447.0 966.3,456.2 979.3,464.0 989.8,479.7 997.6,495.3 1000.2,507.1" fill="none" stroke="#000080" stroke-width="1"/><polyline points="950.6,380.4 955.8,388.3 968.9,387.0 981.9,384.4 1002.8,381.7 1018.5,379.1" fill="none" stroke="#000080" stroke-width="1"/><polyline points="1018.5,390.9 1013.3,411.8 1018.5,435.3" fill="none" stroke="#000080" stroke-width="1"/><polyline points="763.9,377.8 762.6,389.6 770.4,396.1 786.1,400.0 799.2,402.6 807.0,417.0 817.4,426.1 827.9,443.1 838.3,449.6 846.2,456.2 850.1,466.6" fill="none" stroke="#000080" stroke-width="1"/><polyline points="864.4,422.2 863.1,432.7 860.5,443.1 861.8,453.5" fill="none" stroke="#000080" stroke-width="1"/><polyline points="851.4,482.3 861.8,487.5 869.7,497.9 882.7,499.2 887.9,505.8" fill="none" stroke="#000080" stroke-width="1"/><polyline points="859.2,490.1 859.2,516.2 854.0,524.1 855.3,539.7 860.5,552.8" fill="none" stroke="#000080" stroke-width="1"/><polyline points="906.2,479.7 912.7,487.5 911.4,500.5 906.2,505.8" fill="none" stroke="#000080" stroke-width="1"/><polyline points="948.0,505.8 953.2,521.4 963.7,531.9 968.9,547.5 970.2,563.2" fill="none" stroke="#000080" stroke-width="1"/><polyline points="835.7,370.0 843.6,372.6 854.0,377.8 855.3,389.6" fill="none" stroke="#000080" stroke-width="1"/><polyline points="840.9,389.6 843.6,398.7 848.8,403.9" fill="none" stroke="#000080" stroke-width="1"/><polyline points="500.0,511.4 511.8,509.0 514.9,502.0 517.3,500.4 519.6,502.7 517.3,505.1 517.3,513.7" fill="none" stroke="#ff0000" stroke-width="1"/><polyline points="519.6,520.0 527.5,522.4 532.2,526.3 535.3,527.1 542.4,535.7 547.1,535.7 551.0,533.3 555.7,537.3 560.4,538.0 565.1,536.5 572.2,537.3 576.9,538.0 581.6,548.2 585.5,554.5 591.0,555.3" fill="none" stroke="#ff0000" stroke-width="1"/><polyline points="609.8,554.5 616.1,560.0 620.8,560.8 625.5,560.8 633.3,563.9" fill="none" stroke="#ff0000" stroke-width="1"/><polyline points="572.2,480.0 572.9,489.4 569.0,492.5 565.1,498.8 564.3,507.5 570.6,516.1 576.9,521.6 577.6,525.5 572.9,531.8 572.2,537.3" fill="none" stroke="#ff0000" stroke-width="1"/><polyline points="565.1,500.4 558.0,500.4 552.5,509.0 549.4,517.6 553.3,523.9 554.1,531.8 551.0,533.3" fill="none" stroke="#ff0000" stroke-width="1"/><polyline points="634.9,574.1 625.5,583.5 623.1,589.8" fill="none" stroke="#ff0000" stroke-width="1"/><polyline points="528.2,480.0 520.4,483.1 518.8,492.5 519.6,497.3 515.7,502.0 512.5,508.2 511.0,512.9" fill="none" stroke="#000080" stroke-width="1"/><polyline points="520.4,523.1 529.0,537.3 536.1,552.2 542.4,567.8 547.1,580.4 547.8,600.0" fill="none" stroke="#000080" stroke-width="1"/><polyline points="500.0,566.3 507.8,578.8 514.1,584.3" fill="none" stroke="#000080" stroke-width="1"/><polyline points="525.9,586.7 529.0,594.5 529.8,600.0" fill="none" stroke="#000080" stroke-width="1"/><polyline points="602.0,507.5 594.1,512.9 587.1,518.4 578.4,525.5 572.2,538.8 565.9,545.9 565.1,557.6" fill="none" stroke="#000080" stroke-width="1"/><polyline points="562.7,574.1 558.8,578.8" fill="none" stroke="#000080" stroke-width="1"/><polyline points="567.5,589.8 571.4,600.0" fill="none" stroke="#000080" stroke-width="1"/><polyline points="606.7,480.0 616.1,487.1 617.6,494.1 623.9,505.9 630.2,509.8 639.6,507.5 645.9,508.2 650.6,505.1" fill="none" stroke="#000080" stroke-width="1"/><polyline points="642.0,509.0 644.3,517.6 646.7,534.9 647.5,545.9 643.5,556.9" fill="none" stroke="#000080" stroke-width="1"/><polyline points="616.1,487.1 609.8,495.7" fill="none" stroke="#000080" stroke-width="1"/><polyline points="658.8,500.4 669.0,508.2 672.2,516.1" fill="none" stroke="#000080" stroke-width="1"/><polyline points="680.0,520.8 685.5,522.4 689.4,519.2 688.6,514.5" fill="none" stroke="#000080" stroke-width="1"/><polyline points="694.9,512.9 701.2,522.4 706.7,527.1 709.8,518.4 709.0,508.2 716.9,507.5 725.5,509.0" fill="none" stroke="#000080" stroke-width="1"/><polyline points="734.9,508.2 738.0,502.0 744.3,500.4 752.9,503.5 760.0,512.2 757.6,517.6" fill="none" stroke="#000080" stroke-width="1"/><polyline points="702.7,596.1 715.3,591.4 727.8,582.0 735.7,578.0" fill="none" stroke="#000080" stroke-width="1"/><polyline points="756.1,578.0 765.5,572.5 769.4,568.6" fill="none" stroke="#000080" stroke-width="1"/><polyline points="788.2,565.5 800.0,570.2" fill="none" stroke="#000080" stroke-width="1"/><polyline points="629.4,580.0 624.7,583.1 622.4,590.2" fill="none" stroke="#ff0000" stroke-width="1"/><polyline points="619.2,603.5 616.9,609.8 615.3,616.1 616.9,620.8 615.3,625.5" fill="none" stroke="#ff0000" stroke-width="1"/><polyline points="648.2,631.0 656.1,630.2 659.2,634.1 663.9,635.7 668.6,634.1" fill="none" stroke="#ff0000" stroke-width="1"/><polyline points="678.0,637.3 682.7,642.0 687.5,644.3 690.6,642.7 695.3,640.4 700.0,639.6" fill="none" stroke="#ff0000" stroke-width="1"/><polyline points="687.5,644.3 689.0,649.8 690.6,650.6" fill="none" stroke="#ff0000" stroke-width="1"/><polyline points="599.6,644.3 602.7,647.5 610.6,647.5" fill="none" stroke="#ff0000" stroke-width="1"/><polyline points="594.1,648.2 595.7,652.2 594.9,656.9 585.5,666.3 578.4,672.5" fill="none" stroke="#ff0000" stroke-width="1"/><polyline points="569.0,688.2 564.3,692.9" fill="none" stroke="#ff0000" stroke-width="1"/><polyline points="682.7,666.3 685.9,667.8 696.9,670.2 697.6,672.5" fill="none" stroke="#ff0000" stroke-width="1"/><polyline points="649.8,639.6 652.9,634.9 656.1,633.3 662.4,634.9 665.5,633.3" fill="none" stroke="#000080" stroke-width="1"/><polyline points="637.3,612.9 643.5,615.3 648.2,621.6 656.1,622.4 660.0,620.0" fill="none" stroke="#000080" stroke-width="1"/><polyline points="641.2,610.6 646.7,613.7 648.2,618.4" fill="none" stroke="#000080" stroke-width="1"/><polyline points="665.5,613.7 676.5,613.7 682.7,610.6 687.5,605.1 695.3,602.7" fill="none" stroke="#000080" stroke-width="1"/><polyline points="547.8,580.0 547.8,595.7 543.1,609.8 542.4,616.9 546.3,618.4" fill="none" stroke="#000080" stroke-width="1"/><polyline points="568.2,590.2 572.2,598.8 577.6,608.2 581.6,619.2" fill="none" stroke="#000080" stroke-width="1"/><polyline points="678.0,635.7 685.9,641.2 692.2,642.7 690.6,645.1 682.7,642.0" fill="none" stroke="#808080" stroke-width="1"/><polyline points="665.5,634.1 668.6,633.3" fill="none" stroke="#808080" stroke-width="1"/><polyline points="654.5,690.6 663.9,685.1" fill="none" stroke="#000080" stroke-width="1"/><polyline points="670.2,696.9 678.0,692.9 683.5,685.9 681.9,679.6 685.9,674.1" fill="none" stroke="#000080" stroke-width="1"/><polyline points="591.8,660.0 578.5,672.4" fill="none" stroke="#ff0000" stroke-width="1"/><polyline points="568.8,688.2 564.4,693.5" fill="none" stroke="#ff0000" stroke-width="1"/><polygon points="559.1,712.9 563.5,709.4 569.7,709.4 565.3,713.8 560.0,715.6" fill="none" stroke="#ff0000" stroke-width="1"/><polyline points="588.2,704.1 589.1,714.7 595.3,723.5 600.6,728.8 597.1,727.1 588.2,732.3" fill="none" stroke="#ff0000" stroke-width="1"/><polyline points="595.3,727.9 591.8,739.4 596.2,744.7 601.5,753.5 598.8,760.6 591.8,766.0" fill="none" stroke="#ff0000" stroke-width="1"/><polyline points="612.1,725.3 620.0,726.2 628.8,721.8 635.9,712.9 636.8,707.6 640.3,705.0" fill="none" stroke="#ff0000" stroke-width="1"/><polyline points="647.3,705.0 648.2,709.4 653.5,716.5 660.6,720.0 665.9,732.3 669.4,723.5 672.9,716.5" fill="none" stroke="#ff0000" stroke-width="1"/><polyline points="676.5,702.4 680.0,695.3" fill="none" stroke="#ff0000" stroke-width="1"/><polyline points="588.2,704.1 593.5,711.2 598.8,716.5" fill="none" stroke="#000080" stroke-width="1"/><polyline points="604.1,712.9 612.9,707.6 623.5,707.6 632.3,705.0" fill="none" stroke="#000080" stroke-width="1"/><polyline points="653.5,690.9 665.0,684.7" fill="none" stroke="#000080" stroke-width="1"/><polyline points="670.3,697.9 680.0,693.5" fill="none" stroke="#000080" stroke-width="1"/><polyline points="553.8,718.2 561.8,712.9" fill="none" stroke="#000080" stroke-width="1"/><polyline points="552.1,734.1 552.9,730.6" fill="none" stroke="#000080" stroke-width="1"/><polyline points="544.1,740.3 538.8,733.2 533.5,733.2 526.5,732.3 517.6,735.9 516.8,750.0 514.1,753.5 515.9,766.0" fill="none" stroke="#000080" stroke-width="1"/><polyline points="747.1,649.8 753.6,644.4 762.3,642.2 771.0,639.0 779.6,637.9 784.0,633.6 794.8,635.7 801.3,634.7 804.5,639.0 810.0,645.5 812.1,641.2 811.0,632.5 807.8,626.0 803.5,617.3 802.4,610.8 807.8,604.3 820.8,600.0" fill="none" stroke="#ff0000" stroke-width="1"/><polyline points="686.5,640.1 693.0,641.2 699.5,642.2" fill="none" stroke="#ff0000" stroke-width="1"/><polyline points="719.0,641.2 727.6,641.2" fill="none" stroke="#ff0000" stroke-width="1"/><polyline points="706.0,678.0 712.5,673.6 717.9,671.5 720.1,679.1 727.6,682.3 738.5,681.2 745.0,672.6 755.8,670.4 766.6,671.5 780.7,667.1 779.6,671.5 788.3,685.6 801.3,688.8 818.6,692.1 838.1,696.4 860.0,699.6" fill="none" stroke="#ff0000" stroke-width="1"/><polyline points="717.9,671.5 716.8,686.6 707.1,691.0 719.0,695.3" fill="none" stroke="#ff0000" stroke-width="1"/><polyline points="682.2,697.5 688.7,706.1 699.5,704.0 706.0,710.5 708.2,704.0" fill="none" stroke="#ff0000" stroke-width="1"/><polyline points="684.3,667.1 697.3,670.4" fill="none" stroke="#ff0000" stroke-width="1"/><polyline points="835.9,696.4 825.1,706.1 831.6,712.6 829.4,723.5 835.9,730.0 839.2,736.5 841.4,743.0 833.8,747.3 831.6,751.6 844.6,749.5 860.0,749.5" fill="none" stroke="#ff0000" stroke-width="1"/><polyline points="747.1,656.3 760.1,653.1 773.1,645.5 781.8,637.9 780.7,626.0 781.8,616.2 785.0,610.8 786.1,602.2" fill="none" stroke="#000080" stroke-width="1"/><polyline points="723.3,662.8 726.6,667.1 723.3,675.8 719.0,682.3 722.2,688.8 736.3,691.0 747.1,693.1 749.3,701.8 745.0,712.6 742.8,725.6 739.6,738.6 734.1,745.1 736.3,751.6 745.0,760.3" fill="none" stroke="#000080" stroke-width="1"/><polyline points="784.0,685.6 797.0,683.4" fill="none" stroke="#000080" stroke-width="1"/><polyline points="810.0,685.6 825.1,681.2 838.1,686.6 853.3,693.1 860.0,695.3" fill="none" stroke="#000080" stroke-width="1"/><polyline points="823.0,665.0 838.1,666.1 860.0,662.8" fill="none" stroke="#000080" stroke-width="1"/><polyline points="842.4,706.1 853.3,708.3 860.0,710.5" fill="none" stroke="#000080" stroke-width="1"/><polyline points="680.0,608.7 693.0,603.2" fill="none" stroke="#000080" stroke-width="1"/><polyline points="733.1,730.0 723.3,743.0 722.2,749.5 728.7,749.5 732.0,738.6" fill="none" stroke="#808080" stroke-width="1"/><polyline points="781.8,761.4 786.1,751.6 792.6,747.3 801.3,745.1 814.3,736.5 827.3,735.4 835.9,741.0 834.9,749.5 831.6,758.2 835.9,766.0" fill="none" stroke="#808080" stroke-width="1"/><polyline points="840.0,576.1 850.8,581.5 858.8,585.6 869.6,582.9 876.3,576.1 883.0,564.0 893.8,565.4 907.3,570.8 918.0,574.8 928.8,577.5 939.5,576.1 950.3,580.2 955.7,574.8 969.1,569.4 982.6,565.4 990.7,560.0" fill="none" stroke="#ff0000" stroke-width="1"/><polyline points="950.3,580.2 949.0,595.0 953.0,605.7 958.4,616.5" fill="none" stroke="#ff0000" stroke-width="1"/><polyline points="955.7,632.6 944.9,632.6 935.5,635.3 942.2,640.7 934.2,651.5 935.5,662.2 931.5,670.3 923.4,678.4 918.0,683.8 920.7,689.1 926.1,687.8 928.8,694.5 939.5,699.9 947.6,705.3 955.7,714.7 969.1,722.8 979.9,729.5 990.7,734.9 1001.4,736.2 1012.2,729.5 1020.0,728.1" fill="none" stroke="#ff0000" stroke-width="1"/><polyline points="971.8,627.3 982.6,631.3 998.7,631.3 1012.2,628.6 1018.9,623.2 1020.0,613.8" fill="none" stroke="#ff0000" stroke-width="1"/><polyline points="840.0,695.9 853.5,699.9 864.2,701.2 877.7,690.5 896.5,689.1 907.3,686.4 918.0,683.8" fill="none" stroke="#ff0000" stroke-width="1"/><polyline points="904.6,714.7 920.7,706.6 930.1,699.9 928.8,694.5" fill="none" stroke="#ff0000" stroke-width="1"/><polyline points="904.6,714.7 905.9,728.1 897.8,734.9 892.5,745.6 885.7,752.4 872.3,751.0 866.9,743.0 856.1,751.0 840.0,749.7" fill="none" stroke="#ff0000" stroke-width="1"/><polyline points="910.0,766.0 928.8,763.1 947.6,764.4 961.1,766.0" fill="none" stroke="#ff0000" stroke-width="1"/><polyline points="840.0,593.6 853.5,601.7 869.6,608.4 880.4,605.7 893.8,601.7 899.2,596.3 918.0,600.4 928.8,600.4 939.5,608.4 950.3,611.1" fill="none" stroke="#000080" stroke-width="1"/><polyline points="840.0,666.3 850.8,664.9 866.9,660.9 883.0,654.2 891.1,650.1 893.8,654.2 896.5,667.6 904.6,686.4" fill="none" stroke="#000080" stroke-width="1"/><polyline points="840.0,689.1 856.1,694.5 872.3,690.5 893.8,691.8 918.0,702.6 931.5,699.9 947.6,706.6 969.1,716.0" fill="none" stroke="#000080" stroke-width="1"/><polyline points="840.0,706.6 866.9,718.7 885.7,718.7 904.6,730.8 918.0,734.9 931.5,748.3 942.2,761.8" fill="none" stroke="#000080" stroke-width="1"/><polyline points="996.0,732.2 1020.0,745.6" fill="none" stroke="#000080" stroke-width="1"/><polyline points="858.8,560.0 856.1,576.1" fill="none" stroke="#000080" stroke-width="1"/><polyline points="969.1,560.0 953.0,576.1" fill="none" stroke="#000080" stroke-width="1"/><polygon points="963.8,685.1 990.7,673.0 994.7,669.0 990.7,667.6 966.4,683.8" fill="none" stroke="#808080" stroke-width="1"/><polygon points="942.2,623.2 946.3,623.2 943.6,634.0 942.2,635.3" fill="none" stroke="#808080" stroke-width="1"/><polyline points="845.4,576.1 853.5,582.9" fill="none" stroke="#808080" stroke-width="1"/><polyline points="856.1,759.1 861.5,756.4 866.9,764.5" fill="none" stroke="#808080" stroke-width="1"/><polyline points="180.6,602.2 192.5,602.2 190.3,606.5 183.8,606.5 188.2,611.9 175.2,616.2 183.8,618.4 187.1,623.8 188.2,627.1 194.7,628.2" fill="none" stroke="#808080" stroke-width="1"/><polyline points="201.2,623.8 205.5,628.2 214.1,629.2" fill="none" stroke="#808080" stroke-width="1"/><polyline points="231.5,639.0 233.6,646.6 231.5,649.8 229.3,653.1 232.6,656.3" fill="none" stroke="#808080" stroke-width="1"/><polyline points="231.5,639.0 238.0,637.9 245.6,639.0 247.7,643.3 242.3,644.4 255.3,645.5 256.4,653.1 254.2,656.3 261.8,657.4" fill="none" stroke="#808080" stroke-width="1"/><polyline points="271.5,656.3 280.2,660.6" fill="none" stroke="#808080" stroke-width="1"/><polyline points="266.1,662.8 272.6,667.1 268.3,671.5 265.0,669.3 268.3,678.0 274.8,686.6 281.3,697.5 290.0,704.0 304.0,707.2 302.9,712.6 291.0,710.5" fill="none" stroke="#808080" stroke-width="1"/><polyline points="302.9,718.0 306.2,723.5 301.9,732.1 308.4,736.5 300.8,736.5 309.4,742.9 318.0,751.6 321.2,766.0" fill="none" stroke="#808080" stroke-width="1"/><polyline points="304.0,747.3 303.0,766.0" fill="none" stroke="#808080" stroke-width="1"/><polyline points="259.6,687.7 262.9,687.7" fill="none" stroke="#808080" stroke-width="1"/><polyline points="283.5,660.6 290.0,659.6 300.8,652.0 311.6,650.9 318.1,649.8" fill="none" stroke="#000080" stroke-width="1"/><polyline points="331.1,648.7 340.0,652.0" fill="none" stroke="#000080" stroke-width="1"/><polyline points="340.0,656.3 346.5,658.9 355.2,656.3" fill="none" stroke="#000080" stroke-width="1"/><polyline points="448.8,655.0 452.6,663.9" fill="none" stroke="#000080" stroke-width="1"/><polyline points="460.2,675.8 470.0,681.2 476.5,688.8 481.9,697.5" fill="none" stroke="#000080" stroke-width="1"/><polyline points="453.7,678.0 452.6,684.5 460.2,693.1 463.5,700.7 464.5,706.1" fill="none" stroke="#000080" stroke-width="1"/><polyline points="468.9,722.4 461.3,734.3 459.1,742.9 462.4,753.8 465.6,766.0" fill="none" stroke="#000080" stroke-width="1"/><polyline points="488.4,709.4 489.4,725.6 495.9,738.6 497.0,751.6 489.4,762.4 485.1,766.0" fill="none" stroke="#000080" stroke-width="1"/><polyline points="493.8,607.6 501.4,610.8 506.8,621.7 513.3,645.5" fill="none" stroke="#000080" stroke-width="1"/><polyline points="520.0,734.3 515.4,751.6 517.6,766.0" fill="none" stroke="#000080" stroke-width="1"/><polyline points="610.4,18.6 615.3,17.6 622.2,14.7 627.1,10.8 626.1,7.8 625.1,2.9" fill="none" stroke="#808080" stroke-width="1"/><polyline points="642.7,2.0 649.6,0.0" fill="none" stroke="#808080" stroke-width="1"/><polyline points="757.5,19.6 761.4,22.5 764.3,21.6" fill="none" stroke="#808080" stroke-width="1"/><polyline points="756.5,0.0 759.4,3.9 763.3,2.0" fill="none" stroke="#808080" stroke-width="1"/><polyline points="609.4,320.0 605.9,331.8 604.7,350.6 603.5,360.0 605.9,369.4" fill="none" stroke="#000080" stroke-width="1"/><polyline points="615.3,385.9 623.5,395.3 638.8,398.0 642.0,402.7 646.7,406.7" fill="none" stroke="#000080" stroke-width="1"/><polyline points="648.2,315.3 649.4,322.4 654.1,327.1" fill="none" stroke="#000080" stroke-width="1"/><polyline points="669.4,336.5 674.1,343.5 674.1,357.6 667.1,370.6" fill="none" stroke="#000080" stroke-width="1"/><polyline points="675.3,385.9 682.4,395.3" fill="none" stroke="#000080" stroke-width="1"/><polyline points="698.8,305.9 710.6,310.6 720.0,309.4 731.8,320.0 748.2,329.4 762.4,335.3 776.5,343.5 785.9,348.2" fill="none" stroke="#000080" stroke-width="1"/><polyline points="775.3,342.4 774.1,355.3 772.9,364.7" fill="none" stroke="#000080" stroke-width="1"/><polyline points="780.0,344.7 783.5,355.3 788.2,364.7" fill="none" stroke="#000080" stroke-width="1"/><polyline points="602.7,319.2 602.4,321.2 602.4,341.2 598.8,345.9 597.6,355.3 588.2,356.5" fill="none" stroke="#ff0000" stroke-width="1"/><polyline points="584.7,361.2 585.9,367.1 595.3,369.4" fill="none" stroke="#ff0000" stroke-width="1"/><polyline points="0.0,410.8 4.5,412.7 1.3,415.9" fill="none" stroke="#808080" stroke-width="1"/><polyline points="720.6,252.0 741.2,255.0 742.6,265.3 735.3,272.6 752.9,280.0 758.8,274.1 764.7,268.2 773.5,263.8" fill="none" stroke="#808080" stroke-width="1"/><polyline points="901.0,139.7 907.8,140.0 911.7,144.9 916.6,135.1 923.5,119.4 927.4,108.7 931.3,107.7 933.3,90.1 938.2,82.2 935.2,78.3 937.2,60.7 942.1,58.7 941.1,48.0 937.2,46.0" fill="none" stroke="#808080" stroke-width="1"/><polyline points="946.0,0.0 948.0,7.8 942.1,11.7 943.1,17.6 937.2,23.5 945.0,25.5 941.1,29.4 934.3,31.3" fill="none" stroke="#808080" stroke-width="1"/><polyline points="952.9,68.5 954.8,68.5 951.9,80.3 946.0,91.0 940.1,95.9 936.2,105.7 931.3,117.5 932.3,138.0 934.3,137.0 937.2,125.3 939.2,117.5 942.1,105.7 945.0,97.9 951.9,82.2 955.8,69.5" fill="none" stroke="#808080" stroke-width="1"/><polyline points="1004.7,33.3 1013.5,25.5 1020.0,23.5" fill="none" stroke="#808080" stroke-width="1"/><polyline points="995.9,48.9 993.0,56.8 994.9,66.6 997.9,78.3 1000.8,83.2" fill="none" stroke="#808080" stroke-width="1"/><polyline points="1020.0,58.7 1013.5,68.5 1005.7,75.4 1001.8,82.2" fill="none" stroke="#808080" stroke-width="1"/><polyline points="1020.0,39.2 1017.5,45.0 1018.4,52.9 1020.0,56.8" fill="none" stroke="#808080" stroke-width="1"/><circle cx="117.7" cy="85.6" r="3.2" fill="none" stroke="#808080" stroke-width="1"/><circle cx="324.3" cy="317.9" r="1.5" fill="none" stroke="#808080" stroke-width="1"/><circle cx="118.6" cy="512.5" r="1.5" fill="none" stroke="#808080" stroke-width="1"/><circle cx="913.5" cy="26.6" r="1.5" fill="none" stroke="#808080" stroke-width="1"/><circle cx="398.1" cy="591.8" r="1.5" fill="none" stroke="#808080" stroke-width="1"/><circle cx="393.4" cy="614" r="1.5" fill="none" stroke="#808080" stroke-width="1"/><circle cx="351.3" cy="621.6" r="1.5" fill="none" stroke="#808080" stroke-width="1"/><circle cx="440.2" cy="583.8" r="1.5" fill="none" stroke="#808080" stroke-width="1"/><circle cx="612.4" cy="706.2" r="1.5" fill="none" stroke="#808080" stroke-width="1"/><circle cx="667.3" cy="727.1" r="1.5" fill="none" stroke="#808080" stroke-width="1"/><circle cx="657.6" cy="742.1" r="1.5" fill="none" stroke="#808080" stroke-width="1"/><circle cx="691.9" cy="739.7" r="1.5" fill="none" stroke="#808080" stroke-width="1"/><circle cx="832.7" cy="727.8" r="1.5" fill="none" stroke="#808080" stroke-width="1"/><circle cx="853.3" cy="734.3" r="1.5" fill="none" stroke="#808080" stroke-width="1"/><circle cx="835.9" cy="696.4" r="1.5" fill="none" stroke="#808080" stroke-width="1"/><circle cx="924.2" cy="689.1" r="1.5" fill="none" stroke="#808080" stroke-width="1"/><circle cx="952.5" cy="699.9" r="1.5" fill="none" stroke="#808080" stroke-width="1"/><circle cx="890.3" cy="709.9" r="1.5" fill="none" stroke="#808080" stroke-width="1"/><circle cx="864.2" cy="718.7" r="1.5" fill="none" stroke="#808080" stroke-width="1"/><circle cx="888.4" cy="732.7" r="1.5" fill="none" stroke="#808080" stroke-width="1"/><circle cx="853.5" cy="734.9" r="1.5" fill="none" stroke="#808080" stroke-width="1"/><circle cx="997.4" cy="722.8" r="1.5" fill="none" stroke="#808080" stroke-width="1"/><circle cx="457.4" cy="733.9" r="1.5" fill="none" stroke="#808080" stroke-width="1"/><circle cx="498.1" cy="746.8" r="1.5" fill="none" stroke="#808080" stroke-width="1"/><circle cx="602.4" cy="200.6" r="1.5" fill="none" stroke="#808080" stroke-width="1"/><circle cx="932.6" cy="138.2" r="1.5" fill="none" stroke="#808080" stroke-width="1"/></svg>
<div id="hd"><span>MON 30.11.15 06:00 UTC&nbsp; Bodenwettermeldungen :&nbsp; Niederschlag der letzten 24 Stunden&nbsp; / mm (andere Bezugszeitr&auml;ume in GRAU)</span></div>
<div class="l y" style="left:133px;top:23px">2.6</div>
<div class="l y" style="left:160px;top:32px">6.4</div>
<div class="l y" style="left:208px;top:37px">3.8</div>
<div class="l y" style="left:71px;top:59px">3.4</div>
<div class="l y" style="left:127px;top:64px">4.2</div>
<div class="l g" style="left:201px;top:67px">.4</div>
<div class="l g" style="left:236px;top:75px">.6</div>
<div class="l o" style="left:163px;top:89px">13.8</div>
<div class="l o" style="left:85px;top:113px">12.8</div>
<div class="l o" style="left:199px;top:125px">14.2</div>
<div class="l o" style="left:230px;top:121px">12.2</div>
<div class="l o" style="left:212px;top:150px">13.6</div>
<div class="l o" style="left:169px;top:152px">20.2</div>
<div class="l o" style="left:109px;top:166px">14.4</div>
<div class="l o" style="left:199px;top:170px">15.4</div>
<div class="l o" style="left:168px;top:176px">21.8</div>
<div class="l o" style="left:128px;top:182px">12.4</div>
<div class="l o" style="left:218px;top:189px">19.4</div>
<div class="l y" style="left:256px;top:67px">1.4</div>
<div class="l y" style="left:253px;top:90px">2.4</div>
<div class="l y" style="left:255px;top:165px">5</div>
<div class="l y" style="left:278px;top:182px">2.4</div>
<div class="l o" style="left:250px;top:191px">13.2</div>
<div class="l y" style="left:626px;top:0px">2.5</div>
<div class="l o" style="left:585px;top:15px">11.2</div>
<div class="l o" style="left:738px;top:7px">23.2</div>
<div class="l o" style="left:713px;top:32px">20.1</div>
<div class="l o" style="left:687px;top:69px">24.1</div>
<div class="l o" style="left:642px;top:85px">24.7</div>
<div class="l o" style="left:673px;top:100px">19.8</div>
<div class="l o" style="left:746px;top:99px">12.7</div>
<div class="l o" style="left:695px;top:126px">13.3</div>
<div class="l o" style="left:661px;top:139px">14.6</div>
<div class="l y" style="left:627px;top:145px">3.8</div>
<div class="l y" style="left:740px;top:144px">4.4</div>
<div class="l o" style="left:661px;top:163px">17.8</div>
<div class="l y" style="left:724px;top:161px">5.2</div>
<div class="l y" style="left:751px;top:163px">3.5</div>
<div class="l o" style="left:660px;top:179px">10.8</div>
<div class="l y" style="left:706px;top:179px">6.8</div>
<div class="l y" style="left:668px;top:194px">5.9</div>
<div class="l y" style="left:742px;top:194px">4.7</div>
<div class="l y" style="left:858px;top:7px">9</div>
<div class="l y" style="left:882px;top:9px">8.8</div>
<div class="l y" style="left:951px;top:-3px">7</div>
<div class="l o" style="left:762px;top:34px">28.3</div>
<div class="l o" style="left:809px;top:29px">18</div>
<div class="l y" style="left:926px;top:34px">3.1</div>
<div class="l y" style="left:994px;top:36px">7.5</div>
<div class="l o" style="left:850px;top:47px">14.1</div>
<div class="l y" style="left:903px;top:46px">4.7</div>
<div class="l y" style="left:948px;top:56px">2.7</div>
<div class="l o" style="left:790px;top:73px">30.2</div>
<div class="l y" style="left:986px;top:86px">5.9</div>
<div class="l o" style="left:829px;top:89px">13.8</div>
<div class="l y" style="left:867px;top:90px">9.4</div>
<div class="l o" style="left:886px;top:92px">11.4</div>
<div class="l y" style="left:786px;top:116px">8.7</div>
<div class="l o" style="left:832px;top:128px">15.9</div>
<div class="l y" style="left:883px;top:128px">9.1</div>
<div class="l y" style="left:867px;top:144px">6.9</div>
<div class="l y" style="left:780px;top:153px">6.1</div>
<div class="l o" style="left:822px;top:154px">13.5</div>
<div class="l y" style="left:788px;top:169px">6.9</div>
<div class="l y" style="left:848px;top:179px">5.7</div>
<div class="l g" style="left:798px;top:186px">.6</div>
<div class="l o" style="left:84px;top:199px">13.4</div>
<div class="l o" style="left:111px;top:197px">19.6</div>
<div class="l o" style="left:106px;top:217px">10</div>
<div class="l y" style="left:158px;top:218px">6.8</div>
<div class="l y" style="left:192px;top:221px">7.6</div>
<div class="l o" style="left:226px;top:213px">11.2</div>
<div class="l o" style="left:60px;top:227px">11.6</div>
<div class="l y" style="left:207px;top:239px">4.6</div>
<div class="l o" style="left:235px;top:240px">25.4</div>
<div class="l o" style="left:60px;top:252px">11.8</div>
<div class="l o" style="left:99px;top:256px">13.2</div>
<div class="l y" style="left:169px;top:266px">3.8</div>
<div class="l y" style="left:218px;top:263px">2.4</div>
<div class="l y" style="left:231px;top:285px">4</div>
<div class="l y" style="left:227px;top:301px">1.8</div>
<div class="l y" style="left:173px;top:316px">6.4</div>
<div class="l o" style="left:196px;top:325px">16</div>
<div class="l g" style="left:231px;top:321px">.8</div>
<div class="l y" style="left:165px;top:344px">8.2</div>
<div class="l o" style="left:207px;top:346px">18.4</div>
<div class="l y" style="left:239px;top:343px">3.4</div>
<div class="l o" style="left:191px;top:369px">15.4</div>
<div class="l y" style="left:269px;top:207px">6.2</div>
<div class="l y" style="left:312px;top:248px">5.2</div>
<div class="l y" style="left:285px;top:262px">6.6</div>
<div class="l o" style="left:266px;top:281px">12.8</div>
<div class="l y" style="left:321px;top:278px">1.8</div>
<div class="l y" style="left:251px;top:310px">2.8</div>
<div class="l y" style="left:264px;top:325px">3.6</div>
<div class="l y" style="left:290px;top:331px">3.8</div>
<div class="l y" style="left:322px;top:329px">2</div>
<div class="l y" style="left:345px;top:338px">2</div>
<div class="l y" style="left:376px;top:334px">4.2</div>
<div class="l y" style="left:323px;top:355px">4</div>
<div class="l y" style="left:276px;top:361px">7.8</div>
<div class="l w" style="left:355px;top:368px">.3</div>
<div class="l y" style="left:319px;top:377px">3.6</div>
<div class="l y" style="left:371px;top:383px">6.4</div>
<div class="l y" style="left:263px;top:382px">1.8</div>
<div class="l y" style="left:656px;top:222px">7.4</div>
<div class="l y" style="left:742px;top:219px">4.7</div>
<div class="l o" style="left:691px;top:232px">16.6</div>
<div class="l o" style="left:730px;top:238px">11.5</div>
<div class="l o" style="left:645px;top:250px">13</div>
<div class="l o" style="left:673px;top:251px">15.7</div>
<div class="l o" style="left:697px;top:247px">18.2</div>
<div class="l y" style="left:618px;top:259px">5.3</div>
<div class="l y" style="left:730px;top:266px">4</div>
<div class="l y" style="left:679px;top:272px">5.6</div>
<div class="l y" style="left:723px;top:282px">8</div>
<div class="l y" style="left:648px;top:278px">4.5</div>
<div class="l o" style="left:690px;top:293px">11.3</div>
<div class="l o" style="left:740px;top:292px">15.1</div>
<div class="l y" style="left:611px;top:298px">2.5</div>
<div class="l y" style="left:643px;top:299px">5.7</div>
<div class="l y" style="left:665px;top:301px">3.5</div>
<div class="l y" style="left:527px;top:309px">2.6</div>
<div class="l y" style="left:558px;top:306px">6.8</div>
<div class="l y" style="left:718px;top:307px">6.2</div>
<div class="l y" style="left:573px;top:323px">4.8</div>
<div class="l y" style="left:508px;top:336px">1.2</div>
<div class="l y" style="left:619px;top:328px">5.2</div>
<div class="l y" style="left:651px;top:328px">6.7</div>
<div class="l o" style="left:688px;top:341px">17.5</div>
<div class="l o" style="left:731px;top:332px">11.4</div>
<div class="l y" style="left:547px;top:348px">2.8</div>
<div class="l y" style="left:570px;top:347px">5.3</div>
<div class="l y" style="left:598px;top:347px">5.3</div>
<div class="l y" style="left:640px;top:356px">7</div>
<div class="l y" style="left:743px;top:359px">8.9</div>
<div class="l y" style="left:534px;top:363px">9.4</div>
<div class="l o" style="left:557px;top:364px">10.5</div>
<div class="l o" style="left:679px;top:362px">15.1</div>
<div class="l y" style="left:507px;top:372px">9.4</div>
<div class="l o" style="left:596px;top:372px">24.3</div>
<div class="l o" style="left:626px;top:371px">17.8</div>
<div class="l o" style="left:657px;top:373px">21.9</div>
<div class="l o" style="left:707px;top:372px">19.4</div>
<div class="l o" style="left:734px;top:380px">12.3</div>
<div class="l y" style="left:877px;top:206px">8.3</div>
<div class="l o" style="left:791px;top:221px">10.4</div>
<div class="l y" style="left:816px;top:230px">5.2</div>
<div class="l y" style="left:765px;top:235px">9.5</div>
<div class="l y" style="left:939px;top:235px">2.2</div>
<div class="l y" style="left:971px;top:237px">6.8</div>
<div class="l y" style="left:1009px;top:235px">1.5</div>
<div class="l y" style="left:796px;top:250px">3</div>
<div class="l o" style="left:832px;top:255px">10.9</div>
<div class="l y" style="left:768px;top:258px">8.3</div>
<div class="l y" style="left:894px;top:258px">1.5</div>
<div class="l y" style="left:914px;top:257px">2.7</div>
<div class="l y" style="left:775px;top:275px">9.5</div>
<div class="l y" style="left:888px;top:284px">5.2</div>
<div class="l g" style="left:936px;top:287px">.5</div>
<div class="l y" style="left:965px;top:286px">2.8</div>
<div class="l y" style="left:839px;top:286px">8.2</div>
<div class="l y" style="left:813px;top:295px">7.8</div>
<div class="l o" style="left:792px;top:300px">19</div>
<div class="l y" style="left:860px;top:307px">5.5</div>
<div class="l y" style="left:763px;top:312px">5.6</div>
<div class="l y" style="left:816px;top:312px">4.1</div>
<div class="l y" style="left:941px;top:323px">5</div>
<div class="l y" style="left:1001px;top:328px">2.9</div>
<div class="l y" style="left:837px;top:329px">5.7</div>
<div class="l o" style="left:757px;top:337px">11</div>
<div class="l o" style="left:782px;top:335px">13</div>
<div class="l y" style="left:882px;top:346px">6.6</div>
<div class="l y" style="left:939px;top:365px">3.8</div>
<div class="l y" style="left:771px;top:367px">8.8</div>
<div class="l y" style="left:826px;top:367px">7</div>
<div class="l y" style="left:858px;top:369px">8.2</div>
<div class="l y" style="left:1004px;top:378px">4.3</div>
<div class="l y" style="left:171px;top:383px">6.8</div>
<div class="l o" style="left:202px;top:386px">16.6</div>
<div class="l y" style="left:235px;top:386px">7.8</div>
<div class="l o" style="left:156px;top:407px">13</div>
<div class="l o" style="left:194px;top:414px">14</div>
<div class="l y" style="left:243px;top:417px">6.2</div>
<div class="l o" style="left:203px;top:443px">15.8</div>
<div class="l y" style="left:243px;top:447px">1.2</div>
<div class="l y" style="left:217px;top:462px">3</div>
<div class="l y" style="left:248px;top:474px">1.4</div>
<div class="l y" style="left:168px;top:475px">6.6</div>
<div class="l g" style="left:148px;top:491px">.8</div>
<div class="l y" style="left:322px;top:401px">3.6</div>
<div class="l w" style="left:265px;top:408px">609.6</div>
<div class="l y" style="left:296px;top:412px">2.4</div>
<div class="l y" style="left:332px;top:419px">7.2</div>
<div class="l y" style="left:372px;top:417px">1</div>
<div class="l y" style="left:464px;top:421px">5.1</div>
<div class="l y" style="left:313px;top:431px">5</div>
<div class="l y" style="left:270px;top:436px">2.4</div>
<div class="l g" style="left:422px;top:444px">.4</div>
<div class="l g" style="left:328px;top:457px">.8</div>
<div class="l y" style="left:352px;top:453px">1</div>
<div class="l y" style="left:289px;top:471px">1.8</div>
<div class="l y" style="left:394px;top:474px">5.4</div>
<div class="l y" style="left:452px;top:472px">7</div>
<div class="l o" style="left:396px;top:496px">21.4</div>
<div class="l o" style="left:430px;top:505px">14.5</div>
<div class="l y" style="left:375px;top:507px">1.8</div>
<div class="l g" style="left:285px;top:523px">.6</div>
<div class="l y" style="left:339px;top:530px">1.2</div>
<div class="l g" style="left:414px;top:533px">.2</div>
<div class="l g" style="left:380px;top:538px">.8</div>
<div class="l g" style="left:259px;top:547px">.0</div>
<div class="l g" style="left:322px;top:549px">.6</div>
<div class="l g" style="left:487px;top:549px">.2</div>
<div class="l g" style="left:382px;top:558px">.4</div>
<div class="l g" style="left:429px;top:559px">.0</div>
<div class="l g" style="left:490px;top:571px">.0</div>
<div class="l y" style="left:547px;top:386px">9.9</div>
<div class="l o" style="left:571px;top:386px">15.9</div>
<div class="l o" style="left:491px;top:393px">14.4</div>
<div class="l o" style="left:517px;top:397px">15.7</div>
<div class="l o" style="left:684px;top:391px">14.5</div>
<div class="l o" style="left:648px;top:402px">14.4</div>
<div class="l o" style="left:712px;top:405px">47.3</div>
<div class="l o" style="left:614px;top:414px">12.8</div>
<div class="l o" style="left:660px;top:420px">14.2</div>
<div class="l o" style="left:688px;top:420px">17.7</div>
<div class="l y" style="left:741px;top:425px">8.2</div>
<div class="l y" style="left:530px;top:421px">9.6</div>
<div class="l o" style="left:554px;top:420px">14.2</div>
<div class="l o" style="left:583px;top:425px">16.6</div>
<div class="l o" style="left:540px;top:436px">12.8</div>
<div class="l o" style="left:611px;top:434px">30</div>
<div class="l o u" style="left:635px;top:437px">38.4</div>
<div class="l o" style="left:705px;top:447px">10.9</div>
<div class="l y" style="left:729px;top:448px">5.1</div>
<div class="l y" style="left:542px;top:453px">9.5</div>
<div class="l y" style="left:685px;top:456px">7.2</div>
<div class="l o" style="left:595px;top:463px">12</div>
<div class="l o" style="left:617px;top:466px">23.9</div>
<div class="l o" style="left:667px;top:474px">13</div>
<div class="l o u" style="left:687px;top:475px">16.1</div>
<div class="l o u" style="left:730px;top:475px">31.3</div>
<div class="l o" style="left:585px;top:494px">16.8</div>
<div class="l o u" style="left:634px;top:491px">12.2</div>
<div class="l o" style="left:694px;top:491px">13.2</div>
<div class="l o" style="left:669px;top:502px">26.3</div>
<div class="l y" style="left:726px;top:510px">8.5</div>
<div class="l y" style="left:502px;top:516px">7.4</div>
<div class="l y" style="left:589px;top:516px">6.3</div>
<div class="l y" style="left:661px;top:519px">7.4</div>
<div class="l y" style="left:731px;top:531px">2.4</div>
<div class="l o" style="left:585px;top:532px">16.7</div>
<div class="l o" style="left:690px;top:537px">10.6</div>
<div class="l y u" style="left:626px;top:538px">3.3</div>
<div class="l g" style="left:658px;top:542px">.8</div>
<div class="l y" style="left:591px;top:547px">4.1</div>
<div class="l y" style="left:560px;top:560px">1.8</div>
<div class="l y" style="left:634px;top:560px">4.8</div>
<div class="l y" style="left:729px;top:558px">4.6</div>
<div class="l y" style="left:682px;top:563px">7.9</div>
<div class="l y" style="left:738px;top:574px">2.5</div>
<div class="l o" style="left:779px;top:383px">16.2</div>
<div class="l o" style="left:816px;top:385px">10.7</div>
<div class="l y" style="left:892px;top:393px">8.1</div>
<div class="l y" style="left:927px;top:399px">3.5</div>
<div class="l y" style="left:984px;top:402px">1.2</div>
<div class="l y" style="left:849px;top:401px">6.5</div>
<div class="l y" style="left:822px;top:410px">8.7</div>
<div class="l y" style="left:773px;top:423px">6.5</div>
<div class="l y" style="left:847px;top:423px">7.8</div>
<div class="l o" style="left:801px;top:430px">18.3</div>
<div class="l o" style="left:868px;top:437px">11.4</div>
<div class="l y" style="left:916px;top:436px">3.2</div>
<div class="l y" style="left:941px;top:441px">3.2</div>
<div class="l y" style="left:1001px;top:435px">3.1</div>
<div class="l y" style="left:762px;top:443px">8.9</div>
<div class="l o" style="left:842px;top:451px">30.9</div>
<div class="l y" style="left:797px;top:459px">8.3</div>
<div class="l o" style="left:870px;top:460px">18.1</div>
<div class="l r" style="left:896px;top:466px">52.9</div>
<div class="l y" style="left:980px;top:466px">4.4</div>
<div class="l y" style="left:835px;top:473px">4.7</div>
<div class="l o" style="left:784px;top:479px">22.2</div>
<div class="l y" style="left:814px;top:482px">4.6</div>
<div class="l o" style="left:759px;top:486px">18.3</div>
<div class="l o" style="left:916px;top:483px">21.3</div>
<div class="l o u" style="left:945px;top:493px">13.5</div>
<div class="l o" style="left:761px;top:502px">38.4</div>
<div class="l g" style="left:990px;top:501px">.8</div>
<div class="l y" style="left:854px;top:503px">9.4</div>
<div class="l y" style="left:887px;top:506px">9.5</div>
<div class="l o" style="left:921px;top:505px">15.4</div>
<div class="l y" style="left:815px;top:516px">2.2</div>
<div class="l w" style="left:764px;top:520px">2.8</div>
<div class="l o" style="left:786px;top:522px">22.4</div>
<div class="l y" style="left:969px;top:516px">5</div>
<div class="l y" style="left:943px;top:523px">5.7</div>
<div class="l y" style="left:880px;top:527px">5</div>
<div class="l y" style="left:901px;top:527px">7.3</div>
<div class="l y" style="left:762px;top:535px">5.9</div>
<div class="l g" style="left:834px;top:533px">.9</div>
<div class="l y" style="left:790px;top:537px">8.6</div>
<div class="l g u" style="left:999px;top:528px">.8</div>
<div class="l y" style="left:966px;top:541px">1.4</div>
<div class="l y" style="left:1002px;top:546px">2.4</div>
<div class="l o u" style="left:801px;top:551px">44.3</div>
<div class="l y" style="left:849px;top:548px">1.2</div>
<div class="l y" style="left:889px;top:549px">3.5</div>
<div class="l g" style="left:916px;top:549px">.4</div>
<div class="l y" style="left:769px;top:557px">4.1</div>
<div class="l g" style="left:914px;top:565px">.0</div>
<div class="l y" style="left:1002px;top:571px">7.1</div>
<div class="l g" style="left:237px;top:584px">.0</div>
<div class="l g" style="left:180px;top:589px">.2</div>
<div class="l g" style="left:189px;top:614px">.0</div>
<div class="l y" style="left:216px;top:625px">1.2</div>
<div class="l g" style="left:341px;top:590px">.0</div>
<div class="l g" style="left:482px;top:595px">.0</div>
<div class="l g" style="left:276px;top:609px">.0</div>
<div class="l g" style="left:313px;top:612px">.0</div>
<div class="l g" style="left:464px;top:622px">.0</div>
<div class="l g" style="left:317px;top:640px">.4</div>
<div class="l g" style="left:365px;top:642px">.4</div>
<div class="l y" style="left:263px;top:649px">4</div>
<div class="l g" style="left:398px;top:649px">.0</div>
<div class="l g" style="left:424px;top:662px">.8</div>
<div class="l g" style="left:450px;top:666px">.4</div>
<div class="l g" style="left:399px;top:673px">.8</div>
<div class="l g" style="left:289px;top:683px">.4</div>
<div class="l g" style="left:349px;top:688px">.8</div>
<div class="l g" style="left:483px;top:696px">.0</div>
<div class="l y" style="left:322px;top:701px">2.8</div>
<div class="l y" style="left:410px;top:709px">2</div>
<div class="l g" style="left:460px;top:709px">.4</div>
<div class="l y" style="left:286px;top:715px">1.2</div>
<div class="l y" style="left:377px;top:725px">3.6</div>
<div class="l g" style="left:327px;top:735px">.4</div>
<div class="l g" style="left:513px;top:579px">.0</div>
<div class="l y" style="left:549px;top:582px">4.9</div>
<div class="l y" style="left:621px;top:592px">1</div>
<div class="l o" style="left:633px;top:589px">28.4</div>
<div class="l g" style="left:693px;top:590px">.5</div>
<div class="l y" style="left:727px;top:590px">2.2</div>
<div class="l y u" style="left:649px;top:607px">1.1</div>
<div class="l y" style="left:727px;top:609px">1.4</div>
<div class="l y" style="left:750px;top:604px">2.3</div>
<div class="l y" style="left:526px;top:621px">2.8</div>
<div class="l g" style="left:603px;top:617px">.4</div>
<div class="l o u" style="left:618px;top:619px">15.8</div>
<div class="l y" style="left:706px;top:628px">1.8</div>
<div class="l y" style="left:581px;top:635px">2.6</div>
<div class="l y" style="left:604px;top:634px">2.6</div>
<div class="l o" style="left:626px;top:634px">10.4</div>
<div class="l y" style="left:670px;top:630px">1</div>
<div class="l o" style="left:701px;top:645px">11.7</div>
<div class="l y u" style="left:729px;top:644px">7.9</div>
<div class="l g" style="left:521px;top:653px">.6</div>
<div class="l y" style="left:549px;top:653px">2.4</div>
<div class="l y u" style="left:601px;top:656px">9.4</div>
<div class="l o u" style="left:666px;top:653px">24.8</div>
<div class="l o u" style="left:632px;top:667px">32</div>
<div class="l y" style="left:665px;top:672px">1.3</div>
<div class="l y u" style="left:687px;top:675px">1.8</div>
<div class="l o" style="left:567px;top:675px">20.5</div>
<div class="l y u" style="left:599px;top:686px">4.5</div>
<div class="l y" style="left:575px;top:691px">2.2</div>
<div class="l y" style="left:633px;top:692px">2.7</div>
<div class="l y" style="left:690px;top:692px">1.3</div>
<div class="l o u" style="left:550px;top:696px">19.3</div>
<div class="l g" style="left:511px;top:702px">.2</div>
<div class="l g" style="left:666px;top:705px">.2</div>
<div class="l g" style="left:600px;top:716px">.5</div>
<div class="l g" style="left:530px;top:719px">.0</div>
<div class="l y" style="left:555px;top:721px">2.2</div>
<div class="l y" style="left:546px;top:737px">1.4</div>
<div class="l g" style="left:580px;top:737px">.6</div>
<div class="l y" style="left:546px;top:758px">1.8</div>
<div class="l y" style="left:785px;top:577px">1.7</div>
<div class="l y" style="left:814px;top:583px">6.3</div>
<div class="l y" style="left:969px;top:587px">1.3</div>
<div class="l y" style="left:784px;top:599px">2.5</div>
<div class="l y" style="left:953px;top:602px">1.6</div>
<div class="l y" style="left:1012px;top:604px">2</div>
<div class="l y" style="left:785px;top:619px">5.2</div>
<div class="l y" style="left:955px;top:619px">2.3</div>
<div class="l y" style="left:988px;top:620px">2.5</div>
<div class="l g" style="left:1006px;top:656px">.3</div>
<div class="l w" style="left:798px;top:675px">.3</div>
<div class="l g" style="left:1014px;top:689px">.3</div>
</body></html>
